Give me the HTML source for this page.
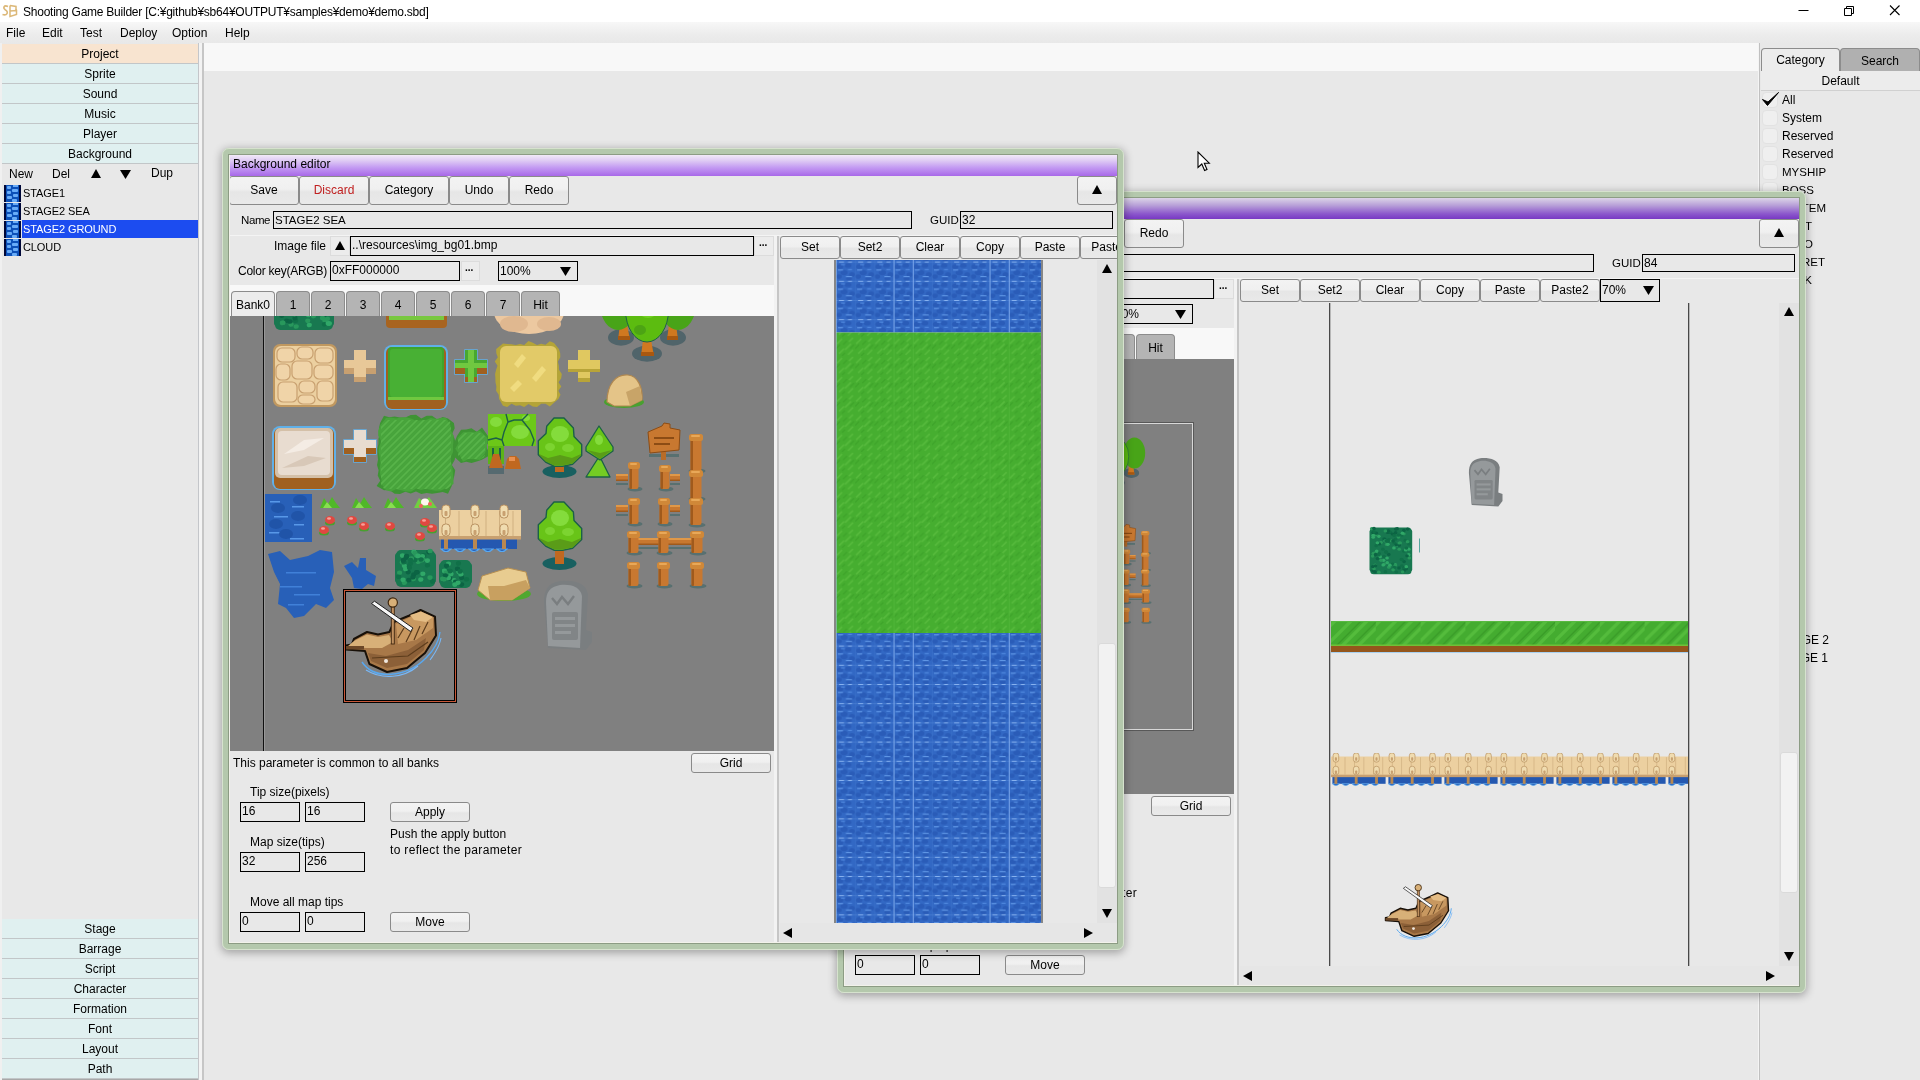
<!DOCTYPE html><html><head><meta charset="utf-8"><title>Shooting Game Builder</title><style>
*{box-sizing:border-box}
html,body{margin:0;padding:0}
body{width:1920px;height:1080px;position:relative;overflow:hidden;background:#e8e8e8;will-change:transform;
 font-family:"Liberation Sans","Noto Sans CJK JP",sans-serif;font-size:12px;color:#000;}
.a{position:absolute;white-space:nowrap}
.t{position:absolute;white-space:nowrap;line-height:16px;height:16px}
.btn{position:absolute;border:1px solid #8a8a8a;border-radius:3px;background:linear-gradient(#f3f3f3,#f0f0f0 45%,#e6e6e6 55%,#e9e9e9);text-align:center;white-space:nowrap;overflow:hidden}
.inp{position:absolute;border:1px solid #000;background:#e8e8e8;white-space:nowrap;overflow:hidden;padding-left:1px}
.sb{position:absolute;left:2px;width:196px;height:20px;line-height:20px;text-align:center;background:#e0f0f0;border-bottom:1px solid #c2c6c8}
.tab{position:absolute;border:1px solid #8c8c8c;border-bottom:none;border-radius:4px 4px 0 0;background:#b4b4b4;text-align:center;line-height:26px;height:25px}
.tab.on{background:#ececec}
.win{position:absolute;background:#e8e8e8;border-radius:7px;box-shadow:0 2px 8px 1px rgba(0,0,0,.3)}
.frame{position:absolute;left:0;top:0;right:0;bottom:0;border:7px solid #b4c8ac;border-radius:7px;pointer-events:none}
.frame:before{content:'';position:absolute;left:-7px;top:-7px;right:-7px;bottom:-7px;border:1px solid #d6e2ce;border-radius:7px}
.frame:after{content:'';position:absolute;left:-1px;top:-1px;right:-1px;bottom:-1px;border:1px solid #8c9c84;box-shadow:inset 1px -1px 0 0 #f2f2ea}
.ttl{position:absolute;left:7px;right:7px;top:8px;height:20px;line-height:19px;padding-left:4px}
.ck{position:absolute;left:1762px;width:16px;height:16px;border-radius:4px;background:#efefef;border:1px solid #e2e2e2}
</style></head><body>
<div class="a" style="left:0px;top:0px;width:1920px;height:22px;background:#fff;"></div>
<svg class="a" style="left:1px;top:3px" width="18" height="16" viewBox="0 0 18 16"><path d="M7 3.5 C3 1.5 1.5 5 4.5 7 C8 9 6 13 1.5 11.5" fill="none" stroke="#dcb878" stroke-width="1.6"/><path d="M9 2.5 L9 13.5 L15.5 11.5 L15.5 7.5 L9 8 M9 2.5 L15 3.5 L15 7.5" fill="none" stroke="#dcb878" stroke-width="1.5"/></svg>
<div class="t" style="left:23px;top:4px;font-size:12px;letter-spacing:-0.24px">Shooting Game Builder [C:¥github¥sb64¥OUTPUT¥samples¥demo¥demo.sbd]</div>
<svg class="a" style="left:1780px;top:0" width="140" height="22"><path d="M18.5 10.5h10" stroke="#000" stroke-width="1"/><path d="M64.5 8.5h7v7h-7z M66.5 8.5v-2h7v7h-2" fill="none" stroke="#000" stroke-width="1"/><path d="M110 5.5l9.5 9.5M119.5 5.5l-9.5 9.5" stroke="#000" stroke-width="1.1"/></svg>
<div class="a" style="left:0px;top:22px;width:1920px;height:21px;background:linear-gradient(#f7f7f7,#ececec 60%,#e8e8e8);"></div>
<div class="t" style="left:6px;top:25px;">File</div>
<div class="t" style="left:42px;top:25px;">Edit</div>
<div class="t" style="left:80px;top:25px;">Test</div>
<div class="t" style="left:120px;top:25px;">Deploy</div>
<div class="t" style="left:172px;top:25px;">Option</div>
<div class="t" style="left:225px;top:25px;">Help</div>
<div class="a" style="left:204px;top:43px;width:1554px;height:28px;background:#f8f8f8;"></div>
<div class="a" style="left:0px;top:43px;width:2px;height:1037px;background:#f0f0f0;"></div>
<div class="a" style="left:198px;top:43px;width:1px;height:1037px;background:#c4c6ca;"></div>
<div class="a" style="left:199px;top:43px;width:3px;height:1037px;background:#f3f3f3;"></div>
<div class="a" style="left:202px;top:43px;width:2px;height:1037px;background:#c6c6c6;"></div>
<div class="sb" style="top:44px;background:#f8e4d0">Project</div>
<div class="sb" style="top:64px;background:#e0f0f0">Sprite</div>
<div class="sb" style="top:84px;background:#e0f0f0">Sound</div>
<div class="sb" style="top:104px;background:#e0f0f0">Music</div>
<div class="sb" style="top:124px;background:#e0f0f0">Player</div>
<div class="sb" style="top:144px;background:#e0f0f0">Background</div>
<div class="sb" style="top:919px">Stage</div>
<div class="sb" style="top:939px">Barrage</div>
<div class="sb" style="top:959px">Script</div>
<div class="sb" style="top:979px">Character</div>
<div class="sb" style="top:999px">Formation</div>
<div class="sb" style="top:1019px">Font</div>
<div class="sb" style="top:1039px">Layout</div>
<div class="sb" style="top:1059px">Path</div>
<div class="a" style="left:2px;top:1079px;width:196px;height:1px;background:#a8a8a8;"></div>
<div class="t" style="left:9px;top:166px;">New</div>
<div class="t" style="left:52px;top:166px;">Del</div>
<div class="t" style="left:151px;top:165px;">Dup</div>
<svg class="a" style="left:91px;top:169px" width="10" height="9"><polygon points="0,9 5.0,0 10,9" fill="#000"/></svg>
<svg class="a" style="left:120px;top:170px" width="11" height="9"><polygon points="0,0 11,0 5.5,9" fill="#000"/></svg>
<svg class="a" style="left:4px;top:185px" width="17" height="17"><rect x="0" y="0" width="17" height="17" fill="#0c50b8"/><rect x="0" y="0" width="2" height="17" fill="#000838"/><rect x="15" y="0" width="2" height="17" fill="#000838"/><rect x="3" y="1" width="4" height="3" rx="1" fill="#68acf8"/><rect x="9" y="0" width="5" height="2" fill="#68acf8"/><rect x="8" y="4" width="6" height="3" rx="1" fill="#68acf8"/><rect x="3" y="6" width="4" height="3" rx="1" fill="#68acf8"/><rect x="9" y="9" width="5" height="3" rx="1" fill="#68acf8"/><rect x="3" y="11" width="5" height="3" rx="1" fill="#68acf8"/><rect x="8" y="14" width="5" height="3" rx="1" fill="#68acf8"/></svg>
<div class="t" style="left:23px;top:185px;font-size:11px;letter-spacing:-.1px;">STAGE1</div>
<svg class="a" style="left:4px;top:203px" width="17" height="17"><rect x="0" y="0" width="17" height="17" fill="#0c50b8"/><rect x="0" y="0" width="2" height="17" fill="#000838"/><rect x="15" y="0" width="2" height="17" fill="#000838"/><rect x="3" y="1" width="4" height="3" rx="1" fill="#68acf8"/><rect x="9" y="0" width="5" height="2" fill="#68acf8"/><rect x="8" y="4" width="6" height="3" rx="1" fill="#68acf8"/><rect x="3" y="6" width="4" height="3" rx="1" fill="#68acf8"/><rect x="9" y="9" width="5" height="3" rx="1" fill="#68acf8"/><rect x="3" y="11" width="5" height="3" rx="1" fill="#68acf8"/><rect x="8" y="14" width="5" height="3" rx="1" fill="#68acf8"/></svg>
<div class="t" style="left:23px;top:203px;font-size:11px;letter-spacing:-.1px;">STAGE2 SEA</div>
<div class="a" style="left:22px;top:220px;width:176px;height:18px;background:#1c4cf0;"></div>
<svg class="a" style="left:4px;top:221px" width="17" height="17"><rect x="0" y="0" width="17" height="17" fill="#0c50b8"/><rect x="0" y="0" width="2" height="17" fill="#000838"/><rect x="15" y="0" width="2" height="17" fill="#000838"/><rect x="3" y="1" width="4" height="3" rx="1" fill="#68acf8"/><rect x="9" y="0" width="5" height="2" fill="#68acf8"/><rect x="8" y="4" width="6" height="3" rx="1" fill="#68acf8"/><rect x="3" y="6" width="4" height="3" rx="1" fill="#68acf8"/><rect x="9" y="9" width="5" height="3" rx="1" fill="#68acf8"/><rect x="3" y="11" width="5" height="3" rx="1" fill="#68acf8"/><rect x="8" y="14" width="5" height="3" rx="1" fill="#68acf8"/></svg>
<div class="t" style="left:23px;top:221px;font-size:11px;letter-spacing:-.1px;color:#fff">STAGE2 GROUND</div>
<svg class="a" style="left:4px;top:239px" width="17" height="17"><rect x="0" y="0" width="17" height="17" fill="#0c50b8"/><rect x="0" y="0" width="2" height="17" fill="#000838"/><rect x="15" y="0" width="2" height="17" fill="#000838"/><rect x="3" y="1" width="4" height="3" rx="1" fill="#68acf8"/><rect x="9" y="0" width="5" height="2" fill="#68acf8"/><rect x="8" y="4" width="6" height="3" rx="1" fill="#68acf8"/><rect x="3" y="6" width="4" height="3" rx="1" fill="#68acf8"/><rect x="9" y="9" width="5" height="3" rx="1" fill="#68acf8"/><rect x="3" y="11" width="5" height="3" rx="1" fill="#68acf8"/><rect x="8" y="14" width="5" height="3" rx="1" fill="#68acf8"/></svg>
<div class="t" style="left:23px;top:239px;font-size:11px;letter-spacing:-.1px;">CLOUD</div>
<div class="a" style="left:1759px;top:43px;width:1px;height:1037px;background:#c0c0c0;"></div>
<div class="a" style="left:1760px;top:43px;width:160px;height:1037px;background:#e8e8e8;"></div>
<div class="a" style="left:1758px;top:43px;width:1px;height:1037px;background:#f4f4f4;"></div>
<div class="tab" style="left:1840px;top:48px;width:80px;height:23px;line-height:25px;background:#b0b0b0">Search</div>
<div class="tab on" style="left:1761px;top:48px;width:79px;height:23px;line-height:23px">Category</div>
<div class="a" style="left:1761px;top:71px;width:159px;height:20px;line-height:21px;text-align:center;background:#ececec;border-bottom:1px solid #d0d0d0">Default</div>
<div class="ck" style="top:92px"></div>
<div class="t" style="left:1782px;top:92px;">All</div>
<div class="ck" style="top:110px"></div>
<div class="t" style="left:1782px;top:110px;">System</div>
<div class="ck" style="top:128px"></div>
<div class="t" style="left:1782px;top:128px;">Reserved</div>
<div class="ck" style="top:146px"></div>
<div class="t" style="left:1782px;top:146px;">Reserved</div>
<div class="ck" style="top:164px"></div>
<div class="t" style="left:1782px;top:164px;font-size:11.5px">MYSHIP</div>
<div class="ck" style="top:182px"></div>
<div class="t" style="left:1782px;top:182px;font-size:11.5px">BOSS</div>
<div class="t" style="right:94px;top:200px;font-size:11.5px">ITEM</div>
<div class="t" style="right:108px;top:218px;font-size:11.5px">SHOT</div>
<div class="t" style="right:107px;top:236px;font-size:11.5px">ZAKO</div>
<div class="t" style="right:95px;top:254px;font-size:11.5px">TURRET</div>
<div class="t" style="right:108px;top:272px;font-size:11.5px">ROCK</div>
<svg class="a" style="left:1760px;top:90px" width="20" height="20"><path d="M2.5 9.5 L7.5 15.5 L18.5 2.5 L8 12 Z" fill="#000" stroke="#000" stroke-width="1" stroke-linejoin="miter"/></svg>
<div class="t" style="right:91px;top:632px">STAGE 2</div>
<div class="t" style="right:92px;top:650px">STAGE 1</div>
<div class="win" style="left:837px;top:191px;width:969px;height:802px">
<div class="a" style="left:7px;top:7px;width:955px;height:788px;overflow:hidden;background:#e8e8e8">
<div class="a" style="left:0;top:0;width:955px;height:21px;background:linear-gradient(#dcd4e8 0%,#b8a0d8 35%,#8c58cc 75%,#7838c4 100%);line-height:19px;padding-left:4px"></div>
<div class="btn" style="left:0px;top:21px;width:70px;height:29px;line-height:27px;">Save</div>
<div class="btn" style="left:70px;top:21px;width:70px;height:29px;line-height:27px;color:#c02020">Discard</div>
<div class="btn" style="left:140px;top:21px;width:80px;height:29px;line-height:27px;">Category</div>
<div class="btn" style="left:220px;top:21px;width:60px;height:29px;line-height:27px;">Undo</div>
<div class="btn" style="left:280px;top:21px;width:60px;height:29px;line-height:27px;">Redo</div>
<div class="btn" style="left:915px;top:21px;width:40px;height:29px;line-height:27px;"></div>
<svg class="a" style="left:930px;top:30px" width="10" height="9"><polygon points="0,9 5.0,0 10,9" fill="#000"/></svg>
<div class="t" style="left:12px;top:57px;letter-spacing:-.4px;font-size:11.5px">Name</div>
<div class="inp" style="left:44px;top:56px;width:706px;height:18px;line-height:15px;line-height:17px;font-size:11.5px">STAGE2 GROUND</div>
<div class="t" style="left:768px;top:57px;font-size:11.5px">GUID</div>
<div class="inp" style="left:798px;top:56px;width:153px;height:18px;line-height:15px;line-height:17px">84</div>
<div class="a" style="left:0px;top:80px;width:955px;height:1px;background:#f4f4f4;"></div>
<div class="a" style="left:0;top:81px;width:390px;height:707px;overflow:hidden">
<div class="t" style="left:45px;top:2px;">Image file</div>
<div class="a" style="left:101px;top:0px;width:20px;height:20px;background:#ececec;border:1px solid #dcdcdc"></div>
<svg class="a" style="left:106px;top:5px" width="10" height="9"><polygon points="0,9 5.0,0 10,9" fill="#000"/></svg>
<div class="inp" style="left:121px;top:0px;width:249px;height:20px;line-height:17px;line-height:16px">..\resources\img_bg01.bmp</div>
<div class="a" style="left:370px;top:0px;width:20px;height:20px;background:#ececec;border:1px solid #dcdcdc"></div>
<div class="t" style="left:375px;top:-1px;font-size:10px;font-weight:bold">...</div>
<div class="t" style="left:9px;top:27px;letter-spacing:-.25px">Color key(ARGB)</div>
<div class="inp" style="left:101px;top:25px;width:130px;height:20px;line-height:17px;">0xFF000000</div>
<div class="a" style="left:232px;top:25px;width:19px;height:20px;background:#ececec;border:1px solid #dcdcdc"></div>
<div class="t" style="left:236px;top:24px;font-size:10px;font-weight:bold">...</div>
<div class="inp" style="left:269px;top:25px;width:80px;height:20px;line-height:17px;line-height:18px">70%</div>
<svg class="a" style="left:331px;top:31px" width="11" height="9"><polygon points="0,0 11,0 5.5,9" fill="#000"/></svg>
<div class="a" style="left:0px;top:49px;width:390px;height:31px;background:#f8f8f8;"></div>
<div class="tab on" style="left:2px;top:55px;width:44px">Bank0</div>
<div class="tab" style="left:47px;top:55px;width:34px">1</div>
<div class="tab" style="left:82px;top:55px;width:34px">2</div>
<div class="tab" style="left:117px;top:55px;width:34px">3</div>
<div class="tab" style="left:152px;top:55px;width:34px">4</div>
<div class="tab" style="left:187px;top:55px;width:34px">5</div>
<div class="tab" style="left:222px;top:55px;width:34px">6</div>
<div class="tab" style="left:257px;top:55px;width:34px">7</div>
<div class="tab" style="left:292px;top:55px;width:39px">Hit</div>
<div class="a" style="left:0px;top:80px;width:390px;height:435px;background:#808080;"></div>
<div class="a" style="left:34px;top:80px;width:1px;height:435px;background:#101010;"></div>
<div class="a" style="left:35px;top:80px;width:1px;height:435px;background:#989898;"></div>
<div class="a" style="left:0;top:80px;width:390px;height:435px;overflow:hidden">
<div class="a" style="left:41px;top:63px;width:309px;height:309px;border:1px solid #585858;box-shadow:inset -1px -1px 0 0 #d8d8d8, inset 1px 1px 0 0 #d8d8d8"></div>
<div class="a" style="left:42px;top:64px;width:512px;height:512px;transform:scale(.6);transform-origin:0 0"><svg width="512" height="512" viewBox="0 0 512 512" style="display:block"><rect x="11" y="46" width="58" height="30" fill="#187850" rx="5"/><rect x="10" y="49" width="60" height="23" fill="#187850" rx="3"/><ellipse cx="26.0" cy="49.5" rx="2.6" ry="2.3" fill="#107048" /><ellipse cx="46.8" cy="48.2" rx="2.6" ry="2.3" fill="#30a868" /><ellipse cx="44.4" cy="61.0" rx="2.6" ry="2.3" fill="#30a868" /><ellipse cx="31.2" cy="49.8" rx="2.6" ry="2.3" fill="#28985c" /><ellipse cx="61.3" cy="59.0" rx="2.6" ry="2.3" fill="#28985c" /><ellipse cx="45.3" cy="71.0" rx="2.6" ry="2.3" fill="#30a868" /><ellipse cx="60.8" cy="60.7" rx="2.6" ry="2.3" fill="#0c6444" /><ellipse cx="46.6" cy="53.0" rx="2.6" ry="2.3" fill="#107048" /><ellipse cx="59.7" cy="55.7" rx="2.6" ry="2.3" fill="#30a868" /><ellipse cx="63.5" cy="64.8" rx="2.6" ry="2.3" fill="#28985c" /><ellipse cx="65.4" cy="69.6" rx="2.6" ry="2.3" fill="#30a868" /><ellipse cx="31.6" cy="66.7" rx="2.6" ry="2.3" fill="#107048" /><ellipse cx="38.9" cy="49.1" rx="2.6" ry="2.3" fill="#107048" /><ellipse cx="18.4" cy="68.9" rx="2.6" ry="2.3" fill="#28985c" /><ellipse cx="24.3" cy="49.1" rx="2.6" ry="2.3" fill="#30a868" /><ellipse cx="17.7" cy="53.1" rx="2.6" ry="2.3" fill="#0c6444" /><ellipse cx="17.6" cy="61.7" rx="2.6" ry="2.3" fill="#0c6444" /><ellipse cx="32.0" cy="49.8" rx="2.6" ry="2.3" fill="#0c6444" /><ellipse cx="43.8" cy="66.8" rx="2.6" ry="2.3" fill="#28985c" /><ellipse cx="27.1" cy="70.5" rx="2.6" ry="2.3" fill="#28985c" /><ellipse cx="46.6" cy="48.0" rx="2.6" ry="2.3" fill="#30a868" /><ellipse cx="32.2" cy="72.5" rx="2.6" ry="2.3" fill="#28985c" /><ellipse cx="38.4" cy="53.9" rx="2.6" ry="2.3" fill="#30a868" /><ellipse cx="40.5" cy="58.6" rx="2.6" ry="2.3" fill="#30a868" /><ellipse cx="31.3" cy="50.0" rx="2.6" ry="2.3" fill="#107048" /><ellipse cx="40.4" cy="57.4" rx="2.6" ry="2.3" fill="#28985c" /><ellipse cx="58.5" cy="63.9" rx="2.6" ry="2.3" fill="#28985c" /><ellipse cx="66.9" cy="58.7" rx="2.6" ry="2.3" fill="#0c6444" /><ellipse cx="42.0" cy="52.6" rx="2.6" ry="2.3" fill="#107048" /><ellipse cx="22.7" cy="66.8" rx="2.6" ry="2.3" fill="#0c6444" /><ellipse cx="19.0" cy="68.8" rx="2.6" ry="2.3" fill="#28985c" /><ellipse cx="57.3" cy="58.4" rx="2.6" ry="2.3" fill="#0c6444" /><ellipse cx="51.7" cy="57.8" rx="2.6" ry="2.3" fill="#28985c" /><ellipse cx="30.6" cy="56.1" rx="2.6" ry="2.3" fill="#28985c" /><ellipse cx="15.3" cy="51.6" rx="2.6" ry="2.3" fill="#0c6444" /><ellipse cx="40.9" cy="51.9" rx="2.6" ry="2.3" fill="#107048" /><ellipse cx="15.6" cy="47.0" rx="2.6" ry="2.3" fill="#0c6444" /><ellipse cx="47.6" cy="58.7" rx="2.6" ry="2.3" fill="#30a868" /><ellipse cx="16.5" cy="50.6" rx="2.6" ry="2.3" fill="#107048" /><ellipse cx="46.9" cy="60.0" rx="2.6" ry="2.3" fill="#0c6444" /><ellipse cx="20.1" cy="58.8" rx="2.6" ry="2.3" fill="#28985c" /><ellipse cx="29.0" cy="54.7" rx="2.6" ry="2.3" fill="#0c6444" /><ellipse cx="60.9" cy="66.6" rx="2.6" ry="2.3" fill="#28985c" /><ellipse cx="31.0" cy="64.1" rx="2.6" ry="2.3" fill="#0c6444" /><ellipse cx="48.0" cy="52.2" rx="2.6" ry="2.3" fill="#28985c" /><ellipse cx="60.5" cy="70.3" rx="2.6" ry="2.3" fill="#107048" /><ellipse cx="30.4" cy="60.1" rx="2.6" ry="2.3" fill="#30a868" /><ellipse cx="49.5" cy="62.1" rx="2.6" ry="2.3" fill="#28985c" /><ellipse cx="26.0" cy="67.5" rx="2.6" ry="2.3" fill="#0c6444" /><ellipse cx="48.0" cy="56.8" rx="2.6" ry="2.3" fill="#107048" /><ellipse cx="37.4" cy="56.7" rx="2.6" ry="2.3" fill="#28985c" /><ellipse cx="64.3" cy="69.4" rx="2.6" ry="2.3" fill="#30a868" /><rect x="122" y="30" width="61" height="44" fill="#a86420" rx="4"/><rect x="125" y="30" width="55" height="36" fill="#44a830" rx="3"/><rect x="125" y="62" width="55" height="4" fill="#78c840" /><ellipse cx="265" cy="58" rx="35" ry="22" fill="#ecc8a0" /><ellipse cx="250" cy="70" rx="14" ry="8" fill="#e0b890" /><ellipse cx="285" cy="70" rx="12" ry="7" fill="#e0b890" /><g><g transform="translate(0,0)"><ellipse cx="357" cy="83.5" rx="13" ry="8.2" fill="#50646a" /><ellipse cx="409" cy="83.5" rx="13" ry="8.2" fill="#50646a" /><ellipse cx="383" cy="99.7" rx="15" ry="8" fill="#50646a" /><polygon points="354,86 356,70 363,70 366,86" fill="#d07820" /><polygon points="403,86 405,70 412,70 414,86" fill="#d07820" /><polygon points="377,102 379,86 387,86 390,102" fill="#d07820" /><rect x="354" y="82" width="12" height="4" fill="#a85810" /><rect x="403" y="82" width="11" height="4" fill="#a85810" /><rect x="377" y="98" width="13" height="4" fill="#a85810" /><ellipse cx="354" cy="50" rx="18" ry="26" fill="#48a418" /><ellipse cx="414" cy="50" rx="18" ry="26" fill="#48a418" /><ellipse cx="383" cy="56" rx="21.5" ry="32" fill="#5cbc10" stroke="#1c6048" stroke-width="1"/><ellipse cx="384" cy="50" rx="12" ry="14" fill="#70d020" /><ellipse cx="376" cy="76" rx="6" ry="5" fill="#4ca414" /></g></g><rect x="9" y="90" width="64" height="63" fill="#c09860" rx="7"/><rect x="11" y="92" width="60" height="59" fill="#ecd0a0" rx="6"/><rect x="13" y="94" width="18" height="14" fill="#f0d4a8" rx="5" stroke="#c8a070" stroke-width="1.2"/><rect x="33" y="93" width="16" height="12" fill="#f0d4a8" rx="5" stroke="#c8a070" stroke-width="1.2"/><rect x="51" y="94" width="18" height="15" fill="#f0d4a8" rx="5" stroke="#c8a070" stroke-width="1.2"/><rect x="12" y="110" width="14" height="16" fill="#f0d4a8" rx="5" stroke="#c8a070" stroke-width="1.2"/><rect x="28" y="107" width="20" height="18" fill="#f0d4a8" rx="5" stroke="#c8a070" stroke-width="1.2"/><rect x="50" y="111" width="19" height="14" fill="#f0d4a8" rx="5" stroke="#c8a070" stroke-width="1.2"/><rect x="14" y="128" width="19" height="20" fill="#f0d4a8" rx="5" stroke="#c8a070" stroke-width="1.2"/><rect x="35" y="127" width="16" height="12" fill="#f0d4a8" rx="5" stroke="#c8a070" stroke-width="1.2"/><rect x="53" y="127" width="16" height="20" fill="#f0d4a8" rx="5" stroke="#c8a070" stroke-width="1.2"/><rect x="34" y="141" width="17" height="9" fill="#f0d4a8" rx="5" stroke="#c8a070" stroke-width="1.2"/><rect x="80" y="106" width="32" height="14" fill="#e8c898" /><rect x="90" y="96" width="12" height="32" fill="#e8c898" /><rect x="80" y="114" width="10" height="6" fill="#c8a070" /><rect x="102" y="114" width="10" height="6" fill="#c8a070" /><rect x="90" y="123" width="12" height="5" fill="#c8a070" /><rect x="120" y="91" width="64" height="65" fill="#60b0e8" rx="8"/><rect x="122" y="93" width="60" height="62" fill="#a06020" rx="6"/><rect x="124" y="93" width="56" height="52" fill="#3ea42c" rx="4"/><rect x="126" y="95" width="52" height="48" fill="#48b034" rx="3"/><rect x="124" y="143" width="56" height="3" fill="#70c840" /><polygon points="201,96 213,96 213,106 223,106 223,120 213,120 213,128 201,128 201,120 191,120 191,106 201,106" fill="none" stroke="#60b0e8" stroke-width="1.5"/><rect x="191" y="106" width="32" height="14" fill="#48a830" /><rect x="201" y="96" width="12" height="32" fill="#48a830" /><rect x="191" y="114" width="10" height="6" fill="#a06020" /><rect x="213" y="114" width="10" height="6" fill="#a06020" /><rect x="201" y="123" width="12" height="5" fill="#a06020" /><rect x="204" y="96" width="6" height="32" fill="#70c840" /><rect x="191" y="109" width="32" height="5" fill="#70c840" /><polygon points="239.0,89.5 243.2,90.1 247.5,90.3 251.8,90.9 256.0,90.1 260.2,90.9 264.5,86.9 268.8,88.8 273.0,91.0 277.2,89.7 281.5,90.8 285.8,87.3 290.0,88.9 294.9,95.0 296.2,99.2 296.3,103.3 293.9,107.5 294.8,111.7 295.0,115.8 297.8,120.0 297.2,124.2 294.5,128.3 297.3,132.5 294.4,136.7 296.5,140.8 294.4,145.0 290.0,148.8 285.8,152.6 281.5,149.7 277.2,149.7 273.0,153.1 268.8,152.6 264.5,150.1 260.2,153.0 256.0,151.2 251.8,151.8 247.5,149.7 243.2,152.9 239.0,151.8 235.1,145.0 234.7,140.8 232.1,136.7 232.4,132.5 231.5,128.3 231.4,124.2 231.1,120.0 232.1,115.8 233.5,111.7 230.8,107.5 233.8,103.3 232.3,99.2 232.2,95.0" fill="#b4a438" /><rect x="236" y="92" width="57" height="56" fill="#e2ca68" rx="6"/><polygon points="250,110 258,100 262,104 254,114" fill="#f0dc80" /><polygon points="268,124 278,112 282,116 272,128" fill="#f0dc80" /><polygon points="246,134 254,126 258,130 250,138" fill="#f0dc80" /><rect x="304" y="106" width="32" height="12" fill="#e0c860" /><rect x="314" y="96" width="12" height="32" fill="#e0c860" /><rect x="304" y="115" width="32" height="3" fill="#b8a438" /><rect x="314" y="124" width="12" height="4" fill="#b8a438" /><ellipse cx="360" cy="148" rx="20" ry="6" fill="#48a030" /><path d="M343 148 C343 130 352 120 364 121 C374 122 379 134 378 146 L366 152 L350 152 Z" fill="#e4c488" stroke="#b08850" stroke-width="1.2"/><polygon points="366,152 378,146 376,132 362,138" fill="#c8a468" /><rect x="8" y="172" width="64" height="64" fill="#60b0e8" rx="8"/><rect x="10" y="174" width="60" height="61" fill="#a06020" rx="6"/><rect x="11" y="174" width="58" height="50" fill="#d4c0a8" rx="5"/><rect x="14" y="177" width="52" height="44" fill="#e8dcd0" rx="4"/><polygon points="20,200 40,186 60,184 40,196" fill="#f4ece4" /><polygon points="18,214 44,202 62,204 40,212" fill="#d8c8b8" /><polygon points="90,176 102,176 102,186 112,186 112,200 102,200 102,208 90,208 90,200 80,200 80,186 90,186" fill="none" stroke="#60b0e8" stroke-width="1.5"/><rect x="80" y="186" width="32" height="14" fill="#e8dcd0" /><rect x="90" y="176" width="12" height="32" fill="#e8dcd0" /><rect x="80" y="194" width="10" height="6" fill="#a06020" /><rect x="102" y="194" width="10" height="6" fill="#a06020" /><rect x="90" y="203" width="12" height="5" fill="#a06020" /><polygon points="120.0,161.7 125.3,163.2 130.7,162.4 136.0,163.5 141.3,163.6 146.7,160.9 152.0,160.7 157.3,164.6 162.7,161.8 168.0,161.7 173.3,165.4 178.7,162.9 184.0,164.6 189.9,169.0 190.7,174.2 188.3,179.5 190.6,184.8 191.8,190.0 190.1,195.2 191.2,200.5 190.8,205.8 187.9,211.0 191.2,216.2 190.4,221.5 189.0,226.8 187.7,232.0 184.0,239.8 178.7,237.9 173.3,239.1 168.0,239.8 162.7,239.0 157.3,240.0 152.0,237.5 146.7,239.4 141.3,237.7 136.0,240.1 130.7,239.8 125.3,236.1 120.0,236.3 112.6,232.0 116.2,226.8 113.7,221.5 114.6,216.2 113.0,211.0 114.0,205.8 113.5,200.5 113.3,195.2 114.4,190.0 114.4,184.8 115.9,179.5 114.9,174.2 116.1,169.0" fill="#3e9434" /><polygon points="122.0,163.9 127.0,163.4 132.0,164.6 137.0,163.6 142.0,163.3 147.0,164.6 152.0,166.7 157.0,166.2 162.0,166.1 167.0,163.9 172.0,165.1 177.0,164.1 182.0,163.7 186.4,171.0 186.9,176.4 189.7,181.7 189.3,187.1 189.2,192.5 189.2,197.8 186.8,203.2 187.2,208.5 188.5,213.9 188.9,219.3 189.4,224.6 189.5,230.0 182.0,234.3 177.0,236.4 172.0,236.7 167.0,236.0 162.0,234.7 157.0,235.9 152.0,234.4 147.0,237.7 142.0,237.5 137.0,236.2 132.0,235.2 127.0,237.6 122.0,236.3 117.5,230.0 117.4,224.6 116.0,219.3 115.7,213.9 116.4,208.5 115.7,203.2 114.6,197.8 115.2,192.5 117.3,187.1 114.2,181.7 114.2,176.4 116.5,171.0" fill="#48a43c" /><clipPath id="d114_163"><rect x="117" y="166" width="70" height="69" rx="5"/></clipPath><g clip-path="url(#d114_163)" stroke="#58b44a" stroke-width="1.6"><path d="M39 238 L114 163"/><path d="M46 238 L121 163"/><path d="M53 238 L128 163"/><path d="M60 238 L135 163"/><path d="M67 238 L142 163"/><path d="M74 238 L149 163"/><path d="M81 238 L156 163"/><path d="M88 238 L163 163"/><path d="M95 238 L170 163"/><path d="M102 238 L177 163"/><path d="M109 238 L184 163"/><path d="M116 238 L191 163"/><path d="M123 238 L198 163"/><path d="M130 238 L205 163"/><path d="M137 238 L212 163"/><path d="M144 238 L219 163"/><path d="M151 238 L226 163"/><path d="M158 238 L233 163"/><path d="M165 238 L240 163"/><path d="M172 238 L247 163"/><path d="M179 238 L254 163"/><path d="M186 238 L261 163"/></g><polygon points="197.0,175.8 202.2,175.4 207.5,174.3 212.8,177.8 218.0,173.6 224.0,182.0 225.9,187.0 222.0,192.0 224.3,197.0 224.6,202.0 218.0,205.8 212.8,207.4 207.5,209.0 202.2,207.8 197.0,209.1 189.4,202.0 189.7,197.0 189.1,192.0 191.0,187.0 193.0,182.0" fill="#3e9434" /><polygon points="199.0,178.3 204.7,177.7 210.3,178.3 216.0,176.8 223.3,184.0 223.3,189.3 222.6,194.7 220.6,200.0 216.0,206.1 210.3,205.3 204.7,205.0 199.0,207.8 195.0,200.0 191.2,194.7 194.4,189.3 193.4,184.0" fill="#48a43c" /><clipPath id="d191_176"><rect x="194" y="179" width="27" height="26" rx="5"/></clipPath><g clip-path="url(#d191_176)" stroke="#58b44a" stroke-width="1.6"><path d="M159 208 L191 176"/><path d="M166 208 L198 176"/><path d="M173 208 L205 176"/><path d="M180 208 L212 176"/><path d="M187 208 L219 176"/><path d="M194 208 L226 176"/><path d="M201 208 L233 176"/><path d="M208 208 L240 176"/><path d="M215 208 L247 176"/><path d="M222 208 L254 176"/></g><rect x="224" y="160" width="48" height="32" fill="#6cc818" /><ellipse cx="232" cy="168" rx="6" ry="5" fill="#84dc3c" /><ellipse cx="256" cy="178" rx="9" ry="7" fill="#84dc3c" /><ellipse cx="262" cy="164" rx="4" ry="3" fill="#84dc3c" /><path d="M242 160 L244 168 L240 178 L238 186 L232 184 L224 186 M244 168 L250 166 L258 166 L264 160 M258 166 L266 176 L270 186 L268 192 M238 186 L240 192" fill="none" stroke="#1c6048" stroke-width="1.4"/><rect x="224" y="192" width="16" height="18" fill="#5cb418" /><rect x="228" y="194" width="2" height="12" fill="#1c6048" /><rect x="235" y="194" width="2" height="12" fill="#1c6048" /><rect x="224" y="212" width="16" height="8" fill="#566a70" /><polygon points="225,214 229,200 235,200 239,214" fill="#c06820" /><polygon points="241,215 243,205 246,202 252,202 255,205 257,215" fill="#c06820" /><rect x="245" y="203" width="6" height="4" fill="#e89050" /><ellipse cx="295.5" cy="217.5" rx="17" ry="6.5" fill="#186060" /><rect x="291" y="210" width="9" height="8" fill="#c06820" /><polygon points="290,164 300,164 309.4,174 310,182.4 317.7,190.5 317.7,201.4 308.6,210.2 298.4,212.4 290.4,212.4 281.6,208 274.3,200.7 274.3,186.8 282,179.5 282.7,172.2" fill="#68c418" stroke="#1c6048" stroke-width="1.4" stroke-linejoin="round"/><polygon points="275,200 284,204 296,201 308,204 317,200 317,201.4 308.6,209.6 298.4,211.6 290.4,211.6 281.6,207.4 275,200.7" fill="#5a9c18" /><ellipse cx="296" cy="180" rx="9" ry="8" fill="#84dc3c" /><ellipse cx="286" cy="193" rx="5" ry="4" fill="#7cd430" /><ellipse cx="304" cy="194" rx="6" ry="4" fill="#7cd430" /><polygon points="335.5,202 346,223 322,223" fill="#74cc24" stroke="#1c6048" stroke-width="1.3" stroke-linejoin="round"/><polygon points="335,172 349,193 349,197 336,206 322,197 322,193" fill="#68c418" stroke="#1c6048" stroke-width="1.3" stroke-linejoin="round"/><polygon points="323,196 336,199 348,196 336,205" fill="#5a9c18" /><ellipse cx="335" cy="186" rx="4" ry="5" fill="#84dc3c" /><g ><ellipse cx="433.0" cy="217" rx="8.5" ry="2.5" fill="#587070" /><rect x="426.5" y="183" width="11" height="34" fill="#c87830" rx="2"/><rect x="426.5" y="183" width="2.5" height="34" fill="#a05a1c" rx="1"/><rect x="425" y="180" width="14" height="7" fill="#d08838" rx="2.5"/><rect x="427" y="181" width="9" height="2" fill="#e8a858" rx="1"/><ellipse cx="433.0" cy="245" rx="8.5" ry="2.5" fill="#587070" /><rect x="426.5" y="219" width="11" height="26" fill="#c87830" rx="2"/><rect x="426.5" y="219" width="2.5" height="26" fill="#a05a1c" rx="1"/><rect x="425" y="216" width="14" height="7" fill="#d08838" rx="2.5"/><rect x="427" y="217" width="9" height="2" fill="#e8a858" rx="1"/><ellipse cx="433.0" cy="271" rx="8.5" ry="2.5" fill="#587070" /><rect x="426.5" y="247" width="11" height="24" fill="#c87830" rx="2"/><rect x="426.5" y="247" width="2.5" height="24" fill="#a05a1c" rx="1"/><rect x="425" y="244" width="14" height="7" fill="#d08838" rx="2.5"/><rect x="427" y="245" width="9" height="2" fill="#e8a858" rx="1"/><rect x="352" y="229" width="12" height="2" fill="#587070" /><rect x="352" y="220" width="12" height="7" fill="#c87830" /><rect x="352" y="220" width="12" height="2" fill="#e09848" /><rect x="352" y="225.5" width="12" height="1.5" fill="#a05a1c" /><ellipse cx="371.0" cy="235" rx="7.5" ry="2.5" fill="#587070" /><rect x="365.5" y="211" width="9" height="24" fill="#c87830" rx="2"/><rect x="365.5" y="211" width="2.5" height="24" fill="#a05a1c" rx="1"/><rect x="364" y="208" width="12" height="7" fill="#d08838" rx="2.5"/><rect x="366" y="209" width="7" height="2" fill="#e8a858" rx="1"/><rect x="406" y="229" width="10" height="2" fill="#587070" /><rect x="406" y="220" width="10" height="7" fill="#c87830" /><rect x="406" y="220" width="10" height="2" fill="#e09848" /><rect x="406" y="225.5" width="10" height="1.5" fill="#a05a1c" /><ellipse cx="402.0" cy="235" rx="7.5" ry="2.5" fill="#587070" /><rect x="396.5" y="214" width="9" height="21" fill="#c87830" rx="2"/><rect x="396.5" y="214" width="2.5" height="21" fill="#a05a1c" rx="1"/><rect x="395" y="211" width="12" height="7" fill="#d08838" rx="2.5"/><rect x="397" y="212" width="7" height="2" fill="#e8a858" rx="1"/><rect x="352" y="260" width="12" height="2" fill="#587070" /><rect x="352" y="251" width="12" height="7" fill="#c87830" /><rect x="352" y="251" width="12" height="2" fill="#e09848" /><rect x="352" y="256.5" width="12" height="1.5" fill="#a05a1c" /><ellipse cx="371.0" cy="270" rx="7.5" ry="2.5" fill="#587070" /><rect x="365.5" y="247" width="9" height="23" fill="#c87830" rx="2"/><rect x="365.5" y="247" width="2.5" height="23" fill="#a05a1c" rx="1"/><rect x="364" y="244" width="12" height="7" fill="#d08838" rx="2.5"/><rect x="366" y="245" width="7" height="2" fill="#e8a858" rx="1"/><rect x="406" y="260" width="10" height="2" fill="#587070" /><rect x="406" y="251" width="10" height="7" fill="#c87830" /><rect x="406" y="251" width="10" height="2" fill="#e09848" /><rect x="406" y="256.5" width="10" height="1.5" fill="#a05a1c" /><ellipse cx="401.0" cy="270" rx="7.5" ry="2.5" fill="#587070" /><rect x="395.5" y="247" width="9" height="23" fill="#c87830" rx="2"/><rect x="395.5" y="247" width="2.5" height="23" fill="#a05a1c" rx="1"/><rect x="394" y="244" width="12" height="7" fill="#d08838" rx="2.5"/><rect x="396" y="245" width="7" height="2" fill="#e8a858" rx="1"/><rect x="374" y="293" width="54" height="2" fill="#587070" /><rect x="374" y="284" width="54" height="7" fill="#c87830" /><rect x="374" y="284" width="54" height="2" fill="#e09848" /><rect x="374" y="289.5" width="54" height="1.5" fill="#a05a1c" /><ellipse cx="370.5" cy="299" rx="8.0" ry="2.5" fill="#587070" /><rect x="364.5" y="280" width="10" height="19" fill="#c87830" rx="2"/><rect x="364.5" y="280" width="2.5" height="19" fill="#a05a1c" rx="1"/><rect x="363" y="277" width="13" height="7" fill="#d08838" rx="2.5"/><rect x="365" y="278" width="8" height="2" fill="#e8a858" rx="1"/><ellipse cx="400.5" cy="299" rx="8.0" ry="2.5" fill="#587070" /><rect x="394.5" y="280" width="10" height="19" fill="#c87830" rx="2"/><rect x="394.5" y="280" width="2.5" height="19" fill="#a05a1c" rx="1"/><rect x="393" y="277" width="13" height="7" fill="#d08838" rx="2.5"/><rect x="395" y="278" width="8" height="2" fill="#e8a858" rx="1"/><ellipse cx="434.0" cy="299" rx="8.5" ry="2.5" fill="#587070" /><rect x="427.5" y="280" width="11" height="19" fill="#c87830" rx="2"/><rect x="427.5" y="280" width="2.5" height="19" fill="#a05a1c" rx="1"/><rect x="426" y="277" width="14" height="7" fill="#d08838" rx="2.5"/><rect x="428" y="278" width="9" height="2" fill="#e8a858" rx="1"/><ellipse cx="370.5" cy="332" rx="8.0" ry="2.5" fill="#587070" /><rect x="364.5" y="311" width="10" height="21" fill="#c87830" rx="2"/><rect x="364.5" y="311" width="2.5" height="21" fill="#a05a1c" rx="1"/><rect x="363" y="308" width="13" height="7" fill="#d08838" rx="2.5"/><rect x="365" y="309" width="8" height="2" fill="#e8a858" rx="1"/><ellipse cx="400.5" cy="332" rx="8.0" ry="2.5" fill="#587070" /><rect x="394.5" y="311" width="10" height="21" fill="#c87830" rx="2"/><rect x="394.5" y="311" width="2.5" height="21" fill="#a05a1c" rx="1"/><rect x="393" y="308" width="13" height="7" fill="#d08838" rx="2.5"/><rect x="395" y="309" width="8" height="2" fill="#e8a858" rx="1"/><ellipse cx="434.0" cy="332" rx="8.5" ry="2.5" fill="#587070" /><rect x="427.5" y="311" width="11" height="21" fill="#c87830" rx="2"/><rect x="427.5" y="311" width="2.5" height="21" fill="#a05a1c" rx="1"/><rect x="426" y="308" width="14" height="7" fill="#d08838" rx="2.5"/><rect x="428" y="309" width="9" height="2" fill="#e8a858" rx="1"/><rect x="385" y="200" width="30" height="3" fill="#587070" /><rect x="397" y="176" width="5" height="30" fill="#b86c28" /><polygon points="384,178 398,172 400,169 406,170 406,174 416,176 415,196 386,199" fill="#c87830" stroke="#8c4c14" stroke-width="1"/><rect x="390" y="183" width="20" height="2" fill="#8c4c14" /><rect x="390" y="189" width="16" height="2" fill="#8c4c14" /></g><rect x="1" y="240" width="47" height="48" fill="#2860b8" /><rect x="6" y="247" width="10" height="1.5" fill="#5898e8" /><rect x="28" y="252" width="12" height="1.5" fill="#5898e8" /><rect x="10" y="262" width="14" height="1.5" fill="#5898e8" /><rect x="30" y="270" width="10" height="1.5" fill="#5898e8" /><rect x="5" y="278" width="12" height="1.5" fill="#5898e8" /><rect x="26" y="284" width="14" height="1.5" fill="#5898e8" /><ellipse cx="14" cy="254" rx="7" ry="5" fill="#2054a8" /><ellipse cx="34" cy="262" rx="7" ry="5" fill="#2054a8" /><ellipse cx="12" cy="270" rx="7" ry="5" fill="#2054a8" /><ellipse cx="36" cy="246" rx="7" ry="5" fill="#2054a8" /><ellipse cx="22" cy="280" rx="7" ry="5" fill="#2054a8" /><polygon points="56,254 60,244 64,250 68,243 72,249 76,254" fill="#50b828" /><polygon points="59,254 63,248 68,254" fill="#88e050" /><polygon points="88,254 92,244 96,250 100,243 104,249 108,254" fill="#50b828" /><polygon points="91,254 95,248 100,254" fill="#88e050" /><polygon points="120,254 124,244 128,250 132,243 136,249 140,254" fill="#50b828" /><polygon points="123,254 127,248 132,254" fill="#88e050" /><polygon points="150,254 155,244 160,248 165,243 170,250 173,254" fill="#70d040" /><ellipse cx="161" cy="248" rx="4" ry="3.5" fill="#fff8f0" /><ellipse cx="157" cy="252" rx="2" ry="2" fill="#f06060" /><ellipse cx="166" cy="250" rx="2" ry="2" fill="#f06060" /><ellipse cx="66" cy="269" rx="5" ry="2.5" fill="#48a030" /><ellipse cx="66" cy="266" rx="5" ry="4" fill="#e04840" /><ellipse cx="65" cy="264.5" rx="2" ry="1.2" fill="#f8a098" /><ellipse cx="60" cy="279" rx="5" ry="2.5" fill="#48a030" /><ellipse cx="60" cy="276" rx="5" ry="4" fill="#e04840" /><ellipse cx="59" cy="274.5" rx="2" ry="1.2" fill="#f8a098" /><ellipse cx="88" cy="269" rx="5" ry="2.5" fill="#48a030" /><ellipse cx="88" cy="266" rx="5" ry="4" fill="#e04840" /><ellipse cx="87" cy="264.5" rx="2" ry="1.2" fill="#f8a098" /><ellipse cx="100" cy="275" rx="5" ry="2.5" fill="#48a030" /><ellipse cx="100" cy="272" rx="5" ry="4" fill="#e04840" /><ellipse cx="99" cy="270.5" rx="2" ry="1.2" fill="#f8a098" /><ellipse cx="126" cy="275" rx="5" ry="2.5" fill="#48a030" /><ellipse cx="126" cy="272" rx="5" ry="4" fill="#e04840" /><ellipse cx="125" cy="270.5" rx="2" ry="1.2" fill="#f8a098" /><ellipse cx="161" cy="271" rx="5" ry="2.5" fill="#48a030" /><ellipse cx="161" cy="268" rx="5" ry="4" fill="#e04840" /><ellipse cx="160" cy="266.5" rx="2" ry="1.2" fill="#f8a098" /><ellipse cx="168" cy="277" rx="5" ry="2.5" fill="#48a030" /><ellipse cx="168" cy="274" rx="5" ry="4" fill="#e04840" /><ellipse cx="167" cy="272.5" rx="2" ry="1.2" fill="#f8a098" /><ellipse cx="156" cy="285" rx="5" ry="2.5" fill="#48a030" /><ellipse cx="156" cy="282" rx="5" ry="4" fill="#e04840" /><ellipse cx="155" cy="280.5" rx="2" ry="1.2" fill="#f8a098" /><rect x="177" y="285" width="76" height="10" fill="#2458b0" /><path d="M177 295 q5 5 10 0 z" fill="#2458b0" stroke="#58a8f0" stroke-width="1.1"/><path d="M191 295 q5 5 10 0 z" fill="#2458b0" stroke="#58a8f0" stroke-width="1.1"/><path d="M205 295 q5 5 10 0 z" fill="#2458b0" stroke="#58a8f0" stroke-width="1.1"/><path d="M219 295 q5 5 10 0 z" fill="#2458b0" stroke="#58a8f0" stroke-width="1.1"/><path d="M233 295 q5 5 10 0 z" fill="#2458b0" stroke="#58a8f0" stroke-width="1.1"/><rect x="180" y="284" width="4" height="11" fill="#b88850" /><rect x="209" y="284" width="4" height="11" fill="#b88850" /><rect x="238" y="284" width="4" height="11" fill="#b88850" /><rect x="175" y="256" width="82" height="29" fill="#ecd0a0" /><rect x="175" y="282" width="82" height="3.5" fill="#c8a070" /><rect x="181.0" y="257" width="1" height="25" fill="#d0b080" /><rect x="194.5" y="257" width="1" height="25" fill="#d0b080" /><rect x="208.0" y="257" width="1" height="25" fill="#d0b080" /><rect x="221.5" y="257" width="1" height="25" fill="#d0b080" /><rect x="235.0" y="257" width="1" height="25" fill="#d0b080" /><rect x="248.5" y="257" width="1" height="25" fill="#d0b080" /><rect x="178" y="251" width="8" height="13" fill="#f0dcb0" rx="3.5" stroke="#b89060" stroke-width="1"/><rect x="180.5" y="257" width="3" height="5" fill="#c8a070" rx="1"/><rect x="178" y="270" width="8" height="12" fill="#f0dcb0" rx="3.5" stroke="#b89060" stroke-width="1"/><rect x="180.5" y="276" width="3" height="5" fill="#c8a070" rx="1"/><rect x="207" y="251" width="8" height="13" fill="#f0dcb0" rx="3.5" stroke="#b89060" stroke-width="1"/><rect x="209.5" y="257" width="3" height="5" fill="#c8a070" rx="1"/><rect x="207" y="270" width="8" height="12" fill="#f0dcb0" rx="3.5" stroke="#b89060" stroke-width="1"/><rect x="209.5" y="276" width="3" height="5" fill="#c8a070" rx="1"/><rect x="236" y="251" width="8" height="13" fill="#f0dcb0" rx="3.5" stroke="#b89060" stroke-width="1"/><rect x="238.5" y="257" width="3" height="5" fill="#c8a070" rx="1"/><rect x="236" y="270" width="8" height="12" fill="#f0dcb0" rx="3.5" stroke="#b89060" stroke-width="1"/><rect x="238.5" y="276" width="3" height="5" fill="#c8a070" rx="1"/><ellipse cx="295.5" cy="309.5" rx="17" ry="6.5" fill="#186060" /><rect x="291" y="294" width="9" height="16" fill="#c06820" /><polygon points="290,248 300,248 309.4,258 310,266.4 317.7,274.5 317.7,285.4 308.6,294.2 298.4,296.4 290.4,296.4 281.6,292 274.3,284.7 274.3,270.8 282,263.5 282.7,256.2" fill="#68c418" stroke="#1c6048" stroke-width="1.4" stroke-linejoin="round"/><polygon points="275,284 284,288 296,285 308,288 317,284 317,285.4 308.6,293.6 298.4,295.6 290.4,295.6 281.6,291.4 275,284.7" fill="#5a9c18" /><ellipse cx="296" cy="264" rx="9" ry="8" fill="#84dc3c" /><ellipse cx="286" cy="277" rx="5" ry="4" fill="#7cd430" /><ellipse cx="304" cy="278" rx="6" ry="4" fill="#7cd430" /><path d="M4 300 L16 297 L26 306 L44 302 L56 296 L68 298 L70 318 L66 334 L70 346 L62 354 L52 350 L40 362 L30 364 L22 354 L14 350 L16 330 L10 318 Z" fill="#2860b8"/><rect x="22" y="318" width="30" height="1.5" fill="#4080d8" /><rect x="16" y="332" width="22" height="1.5" fill="#4080d8" /><rect x="30" y="340" width="26" height="1.5" fill="#4080d8" /><rect x="24" y="350" width="16" height="1.5" fill="#4080d8" /><path d="M80 312 L88 308 L94 314 L96 304 L102 304 L102 316 L112 322 L110 332 L104 330 L98 335 L90 334 L88 324 Z" fill="#2860b8"/><rect x="132" y="296" width="39" height="37" fill="#187850" rx="5"/><rect x="131" y="299" width="41" height="30" fill="#187850" rx="3"/><ellipse cx="144.2" cy="318.1" rx="2.6" ry="2.3" fill="#0c6444" /><ellipse cx="154.3" cy="307.7" rx="2.6" ry="2.3" fill="#28985c" /><ellipse cx="138.3" cy="308.2" rx="2.6" ry="2.3" fill="#28985c" /><ellipse cx="146.5" cy="309.6" rx="2.6" ry="2.3" fill="#107048" /><ellipse cx="156.8" cy="325.5" rx="2.6" ry="2.3" fill="#30a868" /><ellipse cx="143.0" cy="312.3" rx="2.6" ry="2.3" fill="#107048" /><ellipse cx="149.4" cy="324.9" rx="2.6" ry="2.3" fill="#28985c" /><ellipse cx="138.5" cy="301.5" rx="2.6" ry="2.3" fill="#30a868" /><ellipse cx="140.4" cy="328.7" rx="2.6" ry="2.3" fill="#28985c" /><ellipse cx="164.9" cy="298.1" rx="2.6" ry="2.3" fill="#0c6444" /><ellipse cx="158.9" cy="305.0" rx="2.6" ry="2.3" fill="#28985c" /><ellipse cx="159.9" cy="301.4" rx="2.6" ry="2.3" fill="#107048" /><ellipse cx="151.0" cy="305.9" rx="2.6" ry="2.3" fill="#107048" /><ellipse cx="140.4" cy="311.8" rx="2.6" ry="2.3" fill="#30a868" /><ellipse cx="152.4" cy="301.3" rx="2.6" ry="2.3" fill="#28985c" /><ellipse cx="144.9" cy="326.1" rx="2.6" ry="2.3" fill="#0c6444" /><ellipse cx="153.1" cy="318.2" rx="2.6" ry="2.3" fill="#0c6444" /><ellipse cx="157.9" cy="306.3" rx="2.6" ry="2.3" fill="#28985c" /><ellipse cx="149.9" cy="297.8" rx="2.6" ry="2.3" fill="#30a868" /><ellipse cx="142.2" cy="303.6" rx="2.6" ry="2.3" fill="#0c6444" /><ellipse cx="147.4" cy="304.6" rx="2.6" ry="2.3" fill="#28985c" /><ellipse cx="158.9" cy="319.8" rx="2.6" ry="2.3" fill="#30a868" /><ellipse cx="158.4" cy="302.2" rx="2.6" ry="2.3" fill="#30a868" /><ellipse cx="141.6" cy="315.0" rx="2.6" ry="2.3" fill="#30a868" /><ellipse cx="135.6" cy="318.8" rx="2.6" ry="2.3" fill="#28985c" /><ellipse cx="139.9" cy="308.2" rx="2.6" ry="2.3" fill="#107048" /><ellipse cx="163.4" cy="306.6" rx="2.6" ry="2.3" fill="#30a868" /><ellipse cx="142.6" cy="302.0" rx="2.6" ry="2.3" fill="#0c6444" /><ellipse cx="168.7" cy="327.4" rx="2.6" ry="2.3" fill="#107048" /><ellipse cx="157.1" cy="305.5" rx="2.6" ry="2.3" fill="#107048" /><ellipse cx="149.8" cy="320.5" rx="2.6" ry="2.3" fill="#0c6444" /><ellipse cx="166.1" cy="297.1" rx="2.6" ry="2.3" fill="#28985c" /><ellipse cx="150.9" cy="299.0" rx="2.6" ry="2.3" fill="#28985c" /><ellipse cx="149.0" cy="323.2" rx="2.6" ry="2.3" fill="#0c6444" /><ellipse cx="146.6" cy="306.1" rx="2.6" ry="2.3" fill="#107048" /><ellipse cx="139.1" cy="325.7" rx="2.6" ry="2.3" fill="#30a868" /><ellipse cx="166.0" cy="323.6" rx="2.6" ry="2.3" fill="#28985c" /><ellipse cx="152.6" cy="318.3" rx="2.6" ry="2.3" fill="#0c6444" /><ellipse cx="153.9" cy="301.9" rx="2.6" ry="2.3" fill="#30a868" /><ellipse cx="134.6" cy="322.7" rx="2.6" ry="2.3" fill="#107048" /><ellipse cx="139.4" cy="306.4" rx="2.6" ry="2.3" fill="#0c6444" /><ellipse cx="145.5" cy="313.7" rx="2.6" ry="2.3" fill="#107048" /><ellipse cx="163.5" cy="311.3" rx="2.6" ry="2.3" fill="#107048" /><rect x="176" y="306" width="31" height="28" fill="#187850" rx="5"/><rect x="175" y="309" width="33" height="21" fill="#187850" rx="3"/><ellipse cx="187.0" cy="320.1" rx="2.6" ry="2.3" fill="#30a868" /><ellipse cx="190.0" cy="326.3" rx="2.6" ry="2.3" fill="#30a868" /><ellipse cx="194.9" cy="317.7" rx="2.6" ry="2.3" fill="#30a868" /><ellipse cx="185.6" cy="324.4" rx="2.6" ry="2.3" fill="#0c6444" /><ellipse cx="194.0" cy="328.7" rx="2.6" ry="2.3" fill="#0c6444" /><ellipse cx="181.9" cy="316.5" rx="2.6" ry="2.3" fill="#107048" /><ellipse cx="180.0" cy="317.2" rx="2.6" ry="2.3" fill="#107048" /><ellipse cx="197.7" cy="323.7" rx="2.6" ry="2.3" fill="#0c6444" /><ellipse cx="180.4" cy="316.9" rx="2.6" ry="2.3" fill="#30a868" /><ellipse cx="193.5" cy="314.7" rx="2.6" ry="2.3" fill="#0c6444" /><ellipse cx="191.6" cy="327.9" rx="2.6" ry="2.3" fill="#0c6444" /><ellipse cx="184.5" cy="309.7" rx="2.6" ry="2.3" fill="#30a868" /><ellipse cx="184.4" cy="323.9" rx="2.6" ry="2.3" fill="#30a868" /><ellipse cx="196.9" cy="320.2" rx="2.6" ry="2.3" fill="#30a868" /><ellipse cx="197.6" cy="330.6" rx="2.6" ry="2.3" fill="#0c6444" /><ellipse cx="182.5" cy="311.7" rx="2.6" ry="2.3" fill="#0c6444" /><ellipse cx="182.3" cy="318.7" rx="2.6" ry="2.3" fill="#28985c" /><ellipse cx="181.4" cy="321.6" rx="2.6" ry="2.3" fill="#0c6444" /><ellipse cx="186.2" cy="317.1" rx="2.6" ry="2.3" fill="#107048" /><ellipse cx="194.5" cy="309.4" rx="2.6" ry="2.3" fill="#107048" /><ellipse cx="202.6" cy="325.3" rx="2.6" ry="2.3" fill="#107048" /><ellipse cx="190.9" cy="330.6" rx="2.6" ry="2.3" fill="#30a868" /><ellipse cx="180.3" cy="325.2" rx="2.6" ry="2.3" fill="#28985c" /><ellipse cx="196.1" cy="317.4" rx="2.6" ry="2.3" fill="#107048" /><ellipse cx="178.6" cy="324.8" rx="2.6" ry="2.3" fill="#28985c" /><ellipse cx="194.1" cy="328.8" rx="2.6" ry="2.3" fill="#30a868" /><ellipse cx="240" cy="340" rx="27" ry="7" fill="#50a830" /><path d="M214 336 L218 322 L244 314 L262 318 L266 334 L248 346 L226 346 Z" fill="#e8cc90" stroke="#b89050" stroke-width="1"/><polygon points="226,346 248,346 266,334 262,326 240,332 224,332" fill="#c8a060" /><g transform="translate(278,326)"><path d="M6 68 L44 70 L50 62 L50 52 L44 50 L46 14 C44 2 30 0 18 1 C6 3 2 10 2 22 L6 68 Z" fill="#7a7e80"/><path d="M6 66 L38 68 L40 16 C38 6 28 4 18 5 C8 7 4 12 4 22 Z" fill="#95999b"/><rect x="10" y="32" width="26" height="28" fill="#818587" rx="2"/><rect x="13" y="37" width="20" height="3" fill="#95999b" /><rect x="13" y="44" width="20" height="3" fill="#95999b" /><rect x="13" y="51" width="16" height="3" fill="#95999b" /><path d="M10 18 l5 6 l5 -7 l6 7 l6 -8" fill="none" stroke="#7a7e80" stroke-width="2.4"/></g><g transform="translate(82,344)"><path d="M16 64 C28 82 60 80 80 60 C88 52 93 44 94 34" fill="none" stroke="#58a8f0" stroke-width="1.4"/><path d="M20 72 C36 82 58 80 72 68 M84 62 C90 54 94 46 95 40" fill="none" stroke="#78b8f8" stroke-width="1.1"/><polygon points="0,47.5 5.7,46.5 7.9,41 21,34 32,36.5 43.4,34 47.9,24 63.4,17.5 74.5,12 89,18.7 90,37.5 79,55 61,70 41,74 23.4,66 19,53 0,51.5" fill="#a87848" stroke="#181008" stroke-width="2" stroke-linejoin="round"/><polygon points="2,48 8,43 21,36.5 32,39 43,37 47,44 36,50 20,50" fill="#d8b078" /><polygon points="0,48 18,48 18,51.5 0,51.5" fill="#6c4828" /><polygon points="50,26 63.4,19.5 74.5,14.5 87,20 87,30 70,42 52,46" fill="#c89860" /><polygon points="64,17 75,13.5 87,19 80,24 68,22" fill="#e4bc84" /><polygon points="22,55 40,58 62,52 80,40 78,52 61,66 41,70 25,63" fill="#8c6038" /><path d="M52 40 L58 30 M60 44 L66 32 M68 42 L74 28 M76 36 L82 24 M26 60 L62 58 L82 44" fill="none" stroke="#5c3c1c" stroke-width="1.2"/><ellipse cx="40" cy="63" rx="2" ry="2" fill="#f0e8e0" /><rect x="45.3" y="8" width="3" height="38" fill="#c09060" stroke="#402810" stroke-width=".9"/><ellipse cx="46.8" cy="4.5" rx="4.6" ry="4.6" fill="#d8b078" stroke="#402810" stroke-width="1.2"/><polygon points="25.5,5.5 28.5,3.2 67,30 64.5,33.5" fill="#f8f8f8" stroke="#202020" stroke-width="1"/></g></svg></div>
</div>
<div class="t" style="left:4px;top:519px;">This parameter is common to all banks</div>
<div class="btn" style="left:307px;top:517px;width:80px;height:20px;line-height:18px;">Grid</div>
<div class="t" style="left:21px;top:548px;">Tip size(pixels)</div>
<div class="inp" style="left:11px;top:566px;width:60px;height:20px;line-height:17px;">16</div>
<div class="inp" style="left:76px;top:566px;width:60px;height:20px;line-height:17px;">16</div>
<div class="btn" style="left:161px;top:566px;width:80px;height:20px;line-height:18px;">Apply</div>
<div class="t" style="left:161px;top:590px;">Push the apply button</div>
<div class="t" style="left:161px;top:606px;letter-spacing:.33px">to reflect the parameter</div>
<div class="t" style="left:21px;top:598px;">Map size(tips)</div>
<div class="inp" style="left:11px;top:616px;width:60px;height:20px;line-height:17px;">32</div>
<div class="inp" style="left:76px;top:616px;width:60px;height:20px;line-height:17px;">256</div>
<div class="t" style="left:21px;top:658px;">Move all map tips</div>
<div class="inp" style="left:11px;top:676px;width:60px;height:20px;line-height:17px;">0</div>
<div class="inp" style="left:76px;top:676px;width:60px;height:20px;line-height:17px;">0</div>
<div class="btn" style="left:161px;top:676px;width:80px;height:20px;line-height:18px;">Move</div>
</div>
<div class="a" style="left:390px;top:81px;width:4px;height:707px;background:#f2f2f2;"></div>
<div class="a" style="left:393px;top:81px;width:2px;height:707px;background:#c6c6c6;"></div>
<div class="a" style="left:396px;top:81px;width:559px;height:707px;overflow:hidden">
<div class="btn" style="left:0px;top:0px;width:60px;height:23px;line-height:21px;">Set</div>
<div class="btn" style="left:60px;top:0px;width:60px;height:23px;line-height:21px;">Set2</div>
<div class="btn" style="left:120px;top:0px;width:60px;height:23px;line-height:21px;">Clear</div>
<div class="btn" style="left:180px;top:0px;width:60px;height:23px;line-height:21px;">Copy</div>
<div class="btn" style="left:240px;top:0px;width:60px;height:23px;line-height:21px;">Paste</div>
<div class="btn" style="left:300px;top:0px;width:60px;height:23px;line-height:21px;">Paste2</div>
<div class="inp" style="left:360px;top:0px;width:60px;height:23px;line-height:20px;line-height:21px">70%</div>
<svg class="a" style="left:403px;top:7px" width="11" height="9"><polygon points="0,0 11,0 5.5,9" fill="#000"/></svg>
<div class="a" style="left:539px;top:24px;width:20px;height:663px;background:#e2e2e2;"></div>
<div class="a" style="left:0px;top:687px;width:559px;height:20px;background:#e6e6e6;"></div>
<svg class="a" style="left:544px;top:28px" width="10" height="9"><polygon points="0,9 5.0,0 10,9" fill="#000"/></svg>
<svg class="a" style="left:544px;top:673px" width="10" height="9"><polygon points="0,0 10,0 5.0,9" fill="#000"/></svg>
<svg class="a" style="left:3px;top:692px" width="9" height="10"><polygon points="9,0 9,10 0,5.0" fill="#000"/></svg>
<svg class="a" style="left:526px;top:692px" width="9" height="10"><polygon points="0,0 9,5.0 0,10" fill="#000"/></svg>
<div class="a" style="left:0;top:24px;width:539px;height:663px;overflow:hidden">
<svg width="538" height="664" viewBox="0 0 538 664" style="display:block;position:absolute;left:0;top:0"><rect x="89" y="0" width="1.3" height="664" fill="#484848" /><rect x="448" y="0" width="1.3" height="664" fill="#484848" /><g transform="translate(227.5,154.5) scale(.7)"><g transform="translate(0,0)"><path d="M6 68 L44 70 L50 62 L50 52 L44 50 L46 14 C44 2 30 0 18 1 C6 3 2 10 2 22 L6 68 Z" fill="#7a7e80"/><path d="M6 66 L38 68 L40 16 C38 6 28 4 18 5 C8 7 4 12 4 22 Z" fill="#95999b"/><rect x="10" y="32" width="26" height="28" fill="#818587" rx="2"/><rect x="13" y="37" width="20" height="3" fill="#95999b" /><rect x="13" y="44" width="20" height="3" fill="#95999b" /><rect x="13" y="51" width="16" height="3" fill="#95999b" /><path d="M10 18 l5 6 l5 -7 l6 7 l6 -8" fill="none" stroke="#7a7e80" stroke-width="2.4"/></g></g><g transform="translate(129.5,223) scale(.7)"><rect x="1" y="2" width="59" height="67" fill="#187850" rx="5"/><rect x="0" y="5" width="61" height="60" fill="#187850" rx="3"/><ellipse cx="49.4" cy="50.8" rx="2.6" ry="2.3" fill="#0c6444" /><ellipse cx="5.2" cy="63.8" rx="2.6" ry="2.3" fill="#0c6444" /><ellipse cx="25.3" cy="52.4" rx="2.6" ry="2.3" fill="#30a868" /><ellipse cx="56.2" cy="25.6" rx="2.6" ry="2.3" fill="#107048" /><ellipse cx="30.8" cy="20.8" rx="2.6" ry="2.3" fill="#28985c" /><ellipse cx="37.0" cy="18.8" rx="2.6" ry="2.3" fill="#107048" /><ellipse cx="20.1" cy="49.0" rx="2.6" ry="2.3" fill="#30a868" /><ellipse cx="29.0" cy="9.3" rx="2.6" ry="2.3" fill="#0c6444" /><ellipse cx="20.4" cy="43.3" rx="2.6" ry="2.3" fill="#107048" /><ellipse cx="56.2" cy="33.1" rx="2.6" ry="2.3" fill="#30a868" /><ellipse cx="6.4" cy="60.9" rx="2.6" ry="2.3" fill="#28985c" /><ellipse cx="8.1" cy="55.9" rx="2.6" ry="2.3" fill="#28985c" /><ellipse cx="36.7" cy="55.2" rx="2.6" ry="2.3" fill="#30a868" /><ellipse cx="16.4" cy="23.5" rx="2.6" ry="2.3" fill="#28985c" /><ellipse cx="13.5" cy="38.8" rx="2.6" ry="2.3" fill="#107048" /><ellipse cx="47.2" cy="12.0" rx="2.6" ry="2.3" fill="#0c6444" /><ellipse cx="8.0" cy="65.6" rx="2.6" ry="2.3" fill="#0c6444" /><ellipse cx="9.0" cy="37.7" rx="2.6" ry="2.3" fill="#28985c" /><ellipse cx="33.1" cy="54.3" rx="2.6" ry="2.3" fill="#107048" /><ellipse cx="56.0" cy="41.0" rx="2.6" ry="2.3" fill="#30a868" /><ellipse cx="27.5" cy="40.6" rx="2.6" ry="2.3" fill="#0c6444" /><ellipse cx="20.4" cy="18.3" rx="2.6" ry="2.3" fill="#107048" /><ellipse cx="13.4" cy="14.8" rx="2.6" ry="2.3" fill="#30a868" /><ellipse cx="29.2" cy="8.7" rx="2.6" ry="2.3" fill="#107048" /><ellipse cx="51.2" cy="61.2" rx="2.6" ry="2.3" fill="#28985c" /><ellipse cx="52.4" cy="61.2" rx="2.6" ry="2.3" fill="#0c6444" /><ellipse cx="49.1" cy="36.0" rx="2.6" ry="2.3" fill="#107048" /><ellipse cx="49.7" cy="59.4" rx="2.6" ry="2.3" fill="#0c6444" /><ellipse cx="34.9" cy="31.4" rx="2.6" ry="2.3" fill="#30a868" /><ellipse cx="7.5" cy="41.6" rx="2.6" ry="2.3" fill="#0c6444" /><ellipse cx="35.3" cy="24.1" rx="2.6" ry="2.3" fill="#107048" /><ellipse cx="16.4" cy="49.1" rx="2.6" ry="2.3" fill="#28985c" /><ellipse cx="41.8" cy="26.4" rx="2.6" ry="2.3" fill="#107048" /><ellipse cx="21.3" cy="54.4" rx="2.6" ry="2.3" fill="#28985c" /><ellipse cx="46.1" cy="56.9" rx="2.6" ry="2.3" fill="#107048" /><ellipse cx="5.5" cy="39.2" rx="2.6" ry="2.3" fill="#28985c" /><ellipse cx="4.5" cy="43.0" rx="2.6" ry="2.3" fill="#28985c" /><ellipse cx="24.5" cy="26.3" rx="2.6" ry="2.3" fill="#28985c" /><ellipse cx="5.0" cy="4.4" rx="2.6" ry="2.3" fill="#107048" /><ellipse cx="42.5" cy="33.2" rx="2.6" ry="2.3" fill="#28985c" /><ellipse cx="54.5" cy="4.4" rx="2.6" ry="2.3" fill="#0c6444" /><ellipse cx="37.1" cy="55.7" rx="2.6" ry="2.3" fill="#28985c" /><ellipse cx="15.1" cy="43.8" rx="2.6" ry="2.3" fill="#30a868" /><ellipse cx="27.0" cy="6.8" rx="2.6" ry="2.3" fill="#0c6444" /><ellipse cx="5.2" cy="9.4" rx="2.6" ry="2.3" fill="#0c6444" /><ellipse cx="14.0" cy="25.6" rx="2.6" ry="2.3" fill="#0c6444" /><ellipse cx="49.1" cy="60.9" rx="2.6" ry="2.3" fill="#107048" /><ellipse cx="41.4" cy="15.8" rx="2.6" ry="2.3" fill="#28985c" /><ellipse cx="46.4" cy="13.0" rx="2.6" ry="2.3" fill="#107048" /><ellipse cx="21.8" cy="18.8" rx="2.6" ry="2.3" fill="#0c6444" /><ellipse cx="39.6" cy="3.8" rx="2.6" ry="2.3" fill="#0c6444" /><ellipse cx="52.5" cy="58.1" rx="2.6" ry="2.3" fill="#30a868" /><ellipse cx="38.7" cy="27.5" rx="2.6" ry="2.3" fill="#30a868" /><ellipse cx="11.4" cy="46.5" rx="2.6" ry="2.3" fill="#0c6444" /><ellipse cx="43.8" cy="24.2" rx="2.6" ry="2.3" fill="#28985c" /><ellipse cx="32.9" cy="11.5" rx="2.6" ry="2.3" fill="#0c6444" /><ellipse cx="22.4" cy="21.1" rx="2.6" ry="2.3" fill="#30a868" /><ellipse cx="35.5" cy="59.2" rx="2.6" ry="2.3" fill="#107048" /><ellipse cx="42.4" cy="27.4" rx="2.6" ry="2.3" fill="#0c6444" /><ellipse cx="48.6" cy="8.1" rx="2.6" ry="2.3" fill="#107048" /><ellipse cx="41.4" cy="13.1" rx="2.6" ry="2.3" fill="#107048" /><ellipse cx="38.1" cy="26.9" rx="2.6" ry="2.3" fill="#0c6444" /><ellipse cx="4.7" cy="57.9" rx="2.6" ry="2.3" fill="#0c6444" /><ellipse cx="45.5" cy="47.7" rx="2.6" ry="2.3" fill="#107048" /><ellipse cx="27.5" cy="19.3" rx="2.6" ry="2.3" fill="#107048" /><ellipse cx="27.6" cy="58.8" rx="2.6" ry="2.3" fill="#28985c" /><ellipse cx="51.6" cy="34.2" rx="2.6" ry="2.3" fill="#30a868" /><ellipse cx="49.1" cy="6.1" rx="2.6" ry="2.3" fill="#0c6444" /><ellipse cx="13.3" cy="66.0" rx="2.6" ry="2.3" fill="#28985c" /><ellipse cx="49.1" cy="11.2" rx="2.6" ry="2.3" fill="#28985c" /><ellipse cx="25.1" cy="45.7" rx="2.6" ry="2.3" fill="#30a868" /><ellipse cx="3.2" cy="3.9" rx="2.6" ry="2.3" fill="#28985c" /><ellipse cx="56.9" cy="45.6" rx="2.6" ry="2.3" fill="#28985c" /><ellipse cx="13.5" cy="41.3" rx="2.6" ry="2.3" fill="#107048" /><ellipse cx="51.1" cy="20.6" rx="2.6" ry="2.3" fill="#107048" /><ellipse cx="8.5" cy="56.8" rx="2.6" ry="2.3" fill="#0c6444" /><ellipse cx="37.5" cy="4.4" rx="2.6" ry="2.3" fill="#0c6444" /><ellipse cx="47.0" cy="10.3" rx="2.6" ry="2.3" fill="#30a868" /><ellipse cx="10.3" cy="35.8" rx="2.6" ry="2.3" fill="#30a868" /><ellipse cx="9.3" cy="12.7" rx="2.6" ry="2.3" fill="#28985c" /><ellipse cx="5.3" cy="16.0" rx="2.6" ry="2.3" fill="#30a868" /><ellipse cx="33.7" cy="62.6" rx="2.6" ry="2.3" fill="#28985c" /><ellipse cx="49.5" cy="63.6" rx="2.6" ry="2.3" fill="#0c6444" /><ellipse cx="42.2" cy="59.9" rx="2.6" ry="2.3" fill="#0c6444" /><ellipse cx="23.5" cy="36.9" rx="2.6" ry="2.3" fill="#107048" /><ellipse cx="23.7" cy="21.3" rx="2.6" ry="2.3" fill="#107048" /><ellipse cx="11.3" cy="24.0" rx="2.6" ry="2.3" fill="#30a868" /><ellipse cx="42.5" cy="24.3" rx="2.6" ry="2.3" fill="#28985c" /><ellipse cx="5.3" cy="13.3" rx="2.6" ry="2.3" fill="#30a868" /><ellipse cx="22.8" cy="65.3" rx="2.6" ry="2.3" fill="#107048" /><ellipse cx="19.1" cy="33.1" rx="2.6" ry="2.3" fill="#107048" /><ellipse cx="54.4" cy="22.4" rx="2.6" ry="2.3" fill="#28985c" /><ellipse cx="19.6" cy="55.6" rx="2.6" ry="2.3" fill="#30a868" /><ellipse cx="25.8" cy="9.3" rx="2.6" ry="2.3" fill="#0c6444" /><ellipse cx="29.1" cy="56.0" rx="2.6" ry="2.3" fill="#30a868" /><ellipse cx="9.8" cy="10.3" rx="2.6" ry="2.3" fill="#0c6444" /><ellipse cx="26.5" cy="22.0" rx="2.6" ry="2.3" fill="#107048" /><ellipse cx="53.6" cy="42.5" rx="2.6" ry="2.3" fill="#0c6444" /><ellipse cx="47.3" cy="65.5" rx="2.6" ry="2.3" fill="#28985c" /><ellipse cx="6.6" cy="8.3" rx="2.6" ry="2.3" fill="#107048" /><ellipse cx="6.4" cy="3.5" rx="2.6" ry="2.3" fill="#0c6444" /><ellipse cx="33.6" cy="21.3" rx="2.6" ry="2.3" fill="#0c6444" /><ellipse cx="46.4" cy="48.0" rx="2.6" ry="2.3" fill="#107048" /><ellipse cx="26.3" cy="26.2" rx="2.6" ry="2.3" fill="#30a868" /><ellipse cx="35.2" cy="13.5" rx="2.6" ry="2.3" fill="#107048" /><ellipse cx="22.7" cy="7.0" rx="2.6" ry="2.3" fill="#28985c" /><ellipse cx="52.7" cy="31.5" rx="2.6" ry="2.3" fill="#107048" /><ellipse cx="9.5" cy="28.1" rx="2.6" ry="2.3" fill="#107048" /><ellipse cx="38.3" cy="65.8" rx="2.6" ry="2.3" fill="#107048" /><ellipse cx="37.3" cy="9.6" rx="2.6" ry="2.3" fill="#0c6444" /><ellipse cx="23.8" cy="37.4" rx="2.6" ry="2.3" fill="#107048" /><ellipse cx="8.8" cy="40.6" rx="2.6" ry="2.3" fill="#0c6444" /></g><rect x="179" y="235.5" width="1" height="14" fill="#58a8a0" /><defs><pattern id="gr2" x="91" y="318" width="44.8" height="24" patternUnits="userSpaceOnUse"><rect x="0" y="0" width="44.8" height="24" fill="#44ac30" /><path d="M-2 22 L20 0 M10 26 L36 0 M26 26 L48 4 M-6 10 L6 -2" stroke="#54bc3c" stroke-width="3.2"/><path d="M4 26 L30 0 M20 26 L46 0" stroke="#3a9c28" stroke-width="1.4"/></pattern></defs><rect x="91" y="318" width="357" height="24" fill="url(#gr2)" /><rect x="91" y="318" width="357" height="1" fill="#58b840" /><rect x="91" y="341.5" width="357" height="2" fill="#70c038" /><rect x="91" y="343" width="357" height="6" fill="#94561c" /><rect x="91" y="349" width="357" height="1" fill="#a8d0f0" /><g transform="translate(91,450) scale(.7)"><svg x="0" y="0" width="510" height="48" viewBox="0 0 510 48"><rect x="2" y="34" width="76" height="10" fill="#2458b0" /><path d="M2 44 q5 5 10 0 z" fill="#2458b0" stroke="#58a8f0" stroke-width="1.1"/><path d="M16 44 q5 5 10 0 z" fill="#2458b0" stroke="#58a8f0" stroke-width="1.1"/><path d="M30 44 q5 5 10 0 z" fill="#2458b0" stroke="#58a8f0" stroke-width="1.1"/><path d="M44 44 q5 5 10 0 z" fill="#2458b0" stroke="#58a8f0" stroke-width="1.1"/><path d="M58 44 q5 5 10 0 z" fill="#2458b0" stroke="#58a8f0" stroke-width="1.1"/><rect x="82" y="34" width="76" height="10" fill="#2458b0" /><path d="M82 44 q5 5 10 0 z" fill="#2458b0" stroke="#58a8f0" stroke-width="1.1"/><path d="M96 44 q5 5 10 0 z" fill="#2458b0" stroke="#58a8f0" stroke-width="1.1"/><path d="M110 44 q5 5 10 0 z" fill="#2458b0" stroke="#58a8f0" stroke-width="1.1"/><path d="M124 44 q5 5 10 0 z" fill="#2458b0" stroke="#58a8f0" stroke-width="1.1"/><path d="M138 44 q5 5 10 0 z" fill="#2458b0" stroke="#58a8f0" stroke-width="1.1"/><rect x="162" y="34" width="76" height="10" fill="#2458b0" /><path d="M162 44 q5 5 10 0 z" fill="#2458b0" stroke="#58a8f0" stroke-width="1.1"/><path d="M176 44 q5 5 10 0 z" fill="#2458b0" stroke="#58a8f0" stroke-width="1.1"/><path d="M190 44 q5 5 10 0 z" fill="#2458b0" stroke="#58a8f0" stroke-width="1.1"/><path d="M204 44 q5 5 10 0 z" fill="#2458b0" stroke="#58a8f0" stroke-width="1.1"/><path d="M218 44 q5 5 10 0 z" fill="#2458b0" stroke="#58a8f0" stroke-width="1.1"/><rect x="242" y="34" width="76" height="10" fill="#2458b0" /><path d="M242 44 q5 5 10 0 z" fill="#2458b0" stroke="#58a8f0" stroke-width="1.1"/><path d="M256 44 q5 5 10 0 z" fill="#2458b0" stroke="#58a8f0" stroke-width="1.1"/><path d="M270 44 q5 5 10 0 z" fill="#2458b0" stroke="#58a8f0" stroke-width="1.1"/><path d="M284 44 q5 5 10 0 z" fill="#2458b0" stroke="#58a8f0" stroke-width="1.1"/><path d="M298 44 q5 5 10 0 z" fill="#2458b0" stroke="#58a8f0" stroke-width="1.1"/><rect x="322" y="34" width="76" height="10" fill="#2458b0" /><path d="M322 44 q5 5 10 0 z" fill="#2458b0" stroke="#58a8f0" stroke-width="1.1"/><path d="M336 44 q5 5 10 0 z" fill="#2458b0" stroke="#58a8f0" stroke-width="1.1"/><path d="M350 44 q5 5 10 0 z" fill="#2458b0" stroke="#58a8f0" stroke-width="1.1"/><path d="M364 44 q5 5 10 0 z" fill="#2458b0" stroke="#58a8f0" stroke-width="1.1"/><path d="M378 44 q5 5 10 0 z" fill="#2458b0" stroke="#58a8f0" stroke-width="1.1"/><rect x="402" y="34" width="76" height="10" fill="#2458b0" /><path d="M402 44 q5 5 10 0 z" fill="#2458b0" stroke="#58a8f0" stroke-width="1.1"/><path d="M416 44 q5 5 10 0 z" fill="#2458b0" stroke="#58a8f0" stroke-width="1.1"/><path d="M430 44 q5 5 10 0 z" fill="#2458b0" stroke="#58a8f0" stroke-width="1.1"/><path d="M444 44 q5 5 10 0 z" fill="#2458b0" stroke="#58a8f0" stroke-width="1.1"/><path d="M458 44 q5 5 10 0 z" fill="#2458b0" stroke="#58a8f0" stroke-width="1.1"/><rect x="482" y="34" width="28" height="10" fill="#2458b0" /><path d="M482 44 q5 5 10 0 z" fill="#2458b0" stroke="#58a8f0" stroke-width="1.1"/><path d="M496 44 q5 5 10 0 z" fill="#2458b0" stroke="#58a8f0" stroke-width="1.1"/><rect x="5" y="33" width="4" height="11" fill="#b88850" /><rect x="34" y="33" width="4" height="11" fill="#b88850" /><rect x="63" y="33" width="4" height="11" fill="#b88850" /><rect x="85" y="33" width="4" height="11" fill="#b88850" /><rect x="114" y="33" width="4" height="11" fill="#b88850" /><rect x="143" y="33" width="4" height="11" fill="#b88850" /><rect x="165" y="33" width="4" height="11" fill="#b88850" /><rect x="194" y="33" width="4" height="11" fill="#b88850" /><rect x="223" y="33" width="4" height="11" fill="#b88850" /><rect x="245" y="33" width="4" height="11" fill="#b88850" /><rect x="274" y="33" width="4" height="11" fill="#b88850" /><rect x="303" y="33" width="4" height="11" fill="#b88850" /><rect x="325" y="33" width="4" height="11" fill="#b88850" /><rect x="354" y="33" width="4" height="11" fill="#b88850" /><rect x="383" y="33" width="4" height="11" fill="#b88850" /><rect x="405" y="33" width="4" height="11" fill="#b88850" /><rect x="434" y="33" width="4" height="11" fill="#b88850" /><rect x="463" y="33" width="4" height="11" fill="#b88850" /><rect x="485" y="33" width="4" height="11" fill="#b88850" /><rect x="0" y="5" width="510" height="29" fill="#ecd0a0" /><rect x="0" y="31" width="510" height="3.5" fill="#c8a070" /><rect x="6.0" y="6" width="1" height="25" fill="#d0b080" /><rect x="19.5" y="6" width="1" height="25" fill="#d0b080" /><rect x="33.0" y="6" width="1" height="25" fill="#d0b080" /><rect x="46.5" y="6" width="1" height="25" fill="#d0b080" /><rect x="60.0" y="6" width="1" height="25" fill="#d0b080" /><rect x="73.5" y="6" width="1" height="25" fill="#d0b080" /><rect x="87.0" y="6" width="1" height="25" fill="#d0b080" /><rect x="100.5" y="6" width="1" height="25" fill="#d0b080" /><rect x="114.0" y="6" width="1" height="25" fill="#d0b080" /><rect x="127.5" y="6" width="1" height="25" fill="#d0b080" /><rect x="141.0" y="6" width="1" height="25" fill="#d0b080" /><rect x="154.5" y="6" width="1" height="25" fill="#d0b080" /><rect x="168.0" y="6" width="1" height="25" fill="#d0b080" /><rect x="181.5" y="6" width="1" height="25" fill="#d0b080" /><rect x="195.0" y="6" width="1" height="25" fill="#d0b080" /><rect x="208.5" y="6" width="1" height="25" fill="#d0b080" /><rect x="222.0" y="6" width="1" height="25" fill="#d0b080" /><rect x="235.5" y="6" width="1" height="25" fill="#d0b080" /><rect x="249.0" y="6" width="1" height="25" fill="#d0b080" /><rect x="262.5" y="6" width="1" height="25" fill="#d0b080" /><rect x="276.0" y="6" width="1" height="25" fill="#d0b080" /><rect x="289.5" y="6" width="1" height="25" fill="#d0b080" /><rect x="303.0" y="6" width="1" height="25" fill="#d0b080" /><rect x="316.5" y="6" width="1" height="25" fill="#d0b080" /><rect x="330.0" y="6" width="1" height="25" fill="#d0b080" /><rect x="343.5" y="6" width="1" height="25" fill="#d0b080" /><rect x="357.0" y="6" width="1" height="25" fill="#d0b080" /><rect x="370.5" y="6" width="1" height="25" fill="#d0b080" /><rect x="384.0" y="6" width="1" height="25" fill="#d0b080" /><rect x="397.5" y="6" width="1" height="25" fill="#d0b080" /><rect x="411.0" y="6" width="1" height="25" fill="#d0b080" /><rect x="424.5" y="6" width="1" height="25" fill="#d0b080" /><rect x="438.0" y="6" width="1" height="25" fill="#d0b080" /><rect x="451.5" y="6" width="1" height="25" fill="#d0b080" /><rect x="465.0" y="6" width="1" height="25" fill="#d0b080" /><rect x="478.5" y="6" width="1" height="25" fill="#d0b080" /><rect x="492.0" y="6" width="1" height="25" fill="#d0b080" /><rect x="505.5" y="6" width="1" height="25" fill="#d0b080" /><rect x="3" y="0" width="8" height="13" fill="#f0dcb0" rx="3.5" stroke="#b89060" stroke-width="1"/><rect x="5.5" y="6" width="3" height="5" fill="#c8a070" rx="1"/><rect x="3" y="19" width="8" height="12" fill="#f0dcb0" rx="3.5" stroke="#b89060" stroke-width="1"/><rect x="5.5" y="25" width="3" height="5" fill="#c8a070" rx="1"/><rect x="32" y="0" width="8" height="13" fill="#f0dcb0" rx="3.5" stroke="#b89060" stroke-width="1"/><rect x="34.5" y="6" width="3" height="5" fill="#c8a070" rx="1"/><rect x="32" y="19" width="8" height="12" fill="#f0dcb0" rx="3.5" stroke="#b89060" stroke-width="1"/><rect x="34.5" y="25" width="3" height="5" fill="#c8a070" rx="1"/><rect x="61" y="0" width="8" height="13" fill="#f0dcb0" rx="3.5" stroke="#b89060" stroke-width="1"/><rect x="63.5" y="6" width="3" height="5" fill="#c8a070" rx="1"/><rect x="61" y="19" width="8" height="12" fill="#f0dcb0" rx="3.5" stroke="#b89060" stroke-width="1"/><rect x="63.5" y="25" width="3" height="5" fill="#c8a070" rx="1"/><rect x="83" y="0" width="8" height="13" fill="#f0dcb0" rx="3.5" stroke="#b89060" stroke-width="1"/><rect x="85.5" y="6" width="3" height="5" fill="#c8a070" rx="1"/><rect x="83" y="19" width="8" height="12" fill="#f0dcb0" rx="3.5" stroke="#b89060" stroke-width="1"/><rect x="85.5" y="25" width="3" height="5" fill="#c8a070" rx="1"/><rect x="112" y="0" width="8" height="13" fill="#f0dcb0" rx="3.5" stroke="#b89060" stroke-width="1"/><rect x="114.5" y="6" width="3" height="5" fill="#c8a070" rx="1"/><rect x="112" y="19" width="8" height="12" fill="#f0dcb0" rx="3.5" stroke="#b89060" stroke-width="1"/><rect x="114.5" y="25" width="3" height="5" fill="#c8a070" rx="1"/><rect x="141" y="0" width="8" height="13" fill="#f0dcb0" rx="3.5" stroke="#b89060" stroke-width="1"/><rect x="143.5" y="6" width="3" height="5" fill="#c8a070" rx="1"/><rect x="141" y="19" width="8" height="12" fill="#f0dcb0" rx="3.5" stroke="#b89060" stroke-width="1"/><rect x="143.5" y="25" width="3" height="5" fill="#c8a070" rx="1"/><rect x="163" y="0" width="8" height="13" fill="#f0dcb0" rx="3.5" stroke="#b89060" stroke-width="1"/><rect x="165.5" y="6" width="3" height="5" fill="#c8a070" rx="1"/><rect x="163" y="19" width="8" height="12" fill="#f0dcb0" rx="3.5" stroke="#b89060" stroke-width="1"/><rect x="165.5" y="25" width="3" height="5" fill="#c8a070" rx="1"/><rect x="192" y="0" width="8" height="13" fill="#f0dcb0" rx="3.5" stroke="#b89060" stroke-width="1"/><rect x="194.5" y="6" width="3" height="5" fill="#c8a070" rx="1"/><rect x="192" y="19" width="8" height="12" fill="#f0dcb0" rx="3.5" stroke="#b89060" stroke-width="1"/><rect x="194.5" y="25" width="3" height="5" fill="#c8a070" rx="1"/><rect x="221" y="0" width="8" height="13" fill="#f0dcb0" rx="3.5" stroke="#b89060" stroke-width="1"/><rect x="223.5" y="6" width="3" height="5" fill="#c8a070" rx="1"/><rect x="221" y="19" width="8" height="12" fill="#f0dcb0" rx="3.5" stroke="#b89060" stroke-width="1"/><rect x="223.5" y="25" width="3" height="5" fill="#c8a070" rx="1"/><rect x="243" y="0" width="8" height="13" fill="#f0dcb0" rx="3.5" stroke="#b89060" stroke-width="1"/><rect x="245.5" y="6" width="3" height="5" fill="#c8a070" rx="1"/><rect x="243" y="19" width="8" height="12" fill="#f0dcb0" rx="3.5" stroke="#b89060" stroke-width="1"/><rect x="245.5" y="25" width="3" height="5" fill="#c8a070" rx="1"/><rect x="272" y="0" width="8" height="13" fill="#f0dcb0" rx="3.5" stroke="#b89060" stroke-width="1"/><rect x="274.5" y="6" width="3" height="5" fill="#c8a070" rx="1"/><rect x="272" y="19" width="8" height="12" fill="#f0dcb0" rx="3.5" stroke="#b89060" stroke-width="1"/><rect x="274.5" y="25" width="3" height="5" fill="#c8a070" rx="1"/><rect x="301" y="0" width="8" height="13" fill="#f0dcb0" rx="3.5" stroke="#b89060" stroke-width="1"/><rect x="303.5" y="6" width="3" height="5" fill="#c8a070" rx="1"/><rect x="301" y="19" width="8" height="12" fill="#f0dcb0" rx="3.5" stroke="#b89060" stroke-width="1"/><rect x="303.5" y="25" width="3" height="5" fill="#c8a070" rx="1"/><rect x="323" y="0" width="8" height="13" fill="#f0dcb0" rx="3.5" stroke="#b89060" stroke-width="1"/><rect x="325.5" y="6" width="3" height="5" fill="#c8a070" rx="1"/><rect x="323" y="19" width="8" height="12" fill="#f0dcb0" rx="3.5" stroke="#b89060" stroke-width="1"/><rect x="325.5" y="25" width="3" height="5" fill="#c8a070" rx="1"/><rect x="352" y="0" width="8" height="13" fill="#f0dcb0" rx="3.5" stroke="#b89060" stroke-width="1"/><rect x="354.5" y="6" width="3" height="5" fill="#c8a070" rx="1"/><rect x="352" y="19" width="8" height="12" fill="#f0dcb0" rx="3.5" stroke="#b89060" stroke-width="1"/><rect x="354.5" y="25" width="3" height="5" fill="#c8a070" rx="1"/><rect x="381" y="0" width="8" height="13" fill="#f0dcb0" rx="3.5" stroke="#b89060" stroke-width="1"/><rect x="383.5" y="6" width="3" height="5" fill="#c8a070" rx="1"/><rect x="381" y="19" width="8" height="12" fill="#f0dcb0" rx="3.5" stroke="#b89060" stroke-width="1"/><rect x="383.5" y="25" width="3" height="5" fill="#c8a070" rx="1"/><rect x="403" y="0" width="8" height="13" fill="#f0dcb0" rx="3.5" stroke="#b89060" stroke-width="1"/><rect x="405.5" y="6" width="3" height="5" fill="#c8a070" rx="1"/><rect x="403" y="19" width="8" height="12" fill="#f0dcb0" rx="3.5" stroke="#b89060" stroke-width="1"/><rect x="405.5" y="25" width="3" height="5" fill="#c8a070" rx="1"/><rect x="432" y="0" width="8" height="13" fill="#f0dcb0" rx="3.5" stroke="#b89060" stroke-width="1"/><rect x="434.5" y="6" width="3" height="5" fill="#c8a070" rx="1"/><rect x="432" y="19" width="8" height="12" fill="#f0dcb0" rx="3.5" stroke="#b89060" stroke-width="1"/><rect x="434.5" y="25" width="3" height="5" fill="#c8a070" rx="1"/><rect x="461" y="0" width="8" height="13" fill="#f0dcb0" rx="3.5" stroke="#b89060" stroke-width="1"/><rect x="463.5" y="6" width="3" height="5" fill="#c8a070" rx="1"/><rect x="461" y="19" width="8" height="12" fill="#f0dcb0" rx="3.5" stroke="#b89060" stroke-width="1"/><rect x="463.5" y="25" width="3" height="5" fill="#c8a070" rx="1"/><rect x="483" y="0" width="8" height="13" fill="#f0dcb0" rx="3.5" stroke="#b89060" stroke-width="1"/><rect x="485.5" y="6" width="3" height="5" fill="#c8a070" rx="1"/><rect x="483" y="19" width="8" height="12" fill="#f0dcb0" rx="3.5" stroke="#b89060" stroke-width="1"/><rect x="485.5" y="25" width="3" height="5" fill="#c8a070" rx="1"/></svg></g><g transform="translate(145.5,581.5) scale(.7)"><g transform="translate(0,0)"><path d="M16 64 C28 82 60 80 80 60 C88 52 93 44 94 34" fill="none" stroke="#58a8f0" stroke-width="1.4"/><path d="M20 72 C36 82 58 80 72 68 M84 62 C90 54 94 46 95 40" fill="none" stroke="#78b8f8" stroke-width="1.1"/><polygon points="0,47.5 5.7,46.5 7.9,41 21,34 32,36.5 43.4,34 47.9,24 63.4,17.5 74.5,12 89,18.7 90,37.5 79,55 61,70 41,74 23.4,66 19,53 0,51.5" fill="#a87848" stroke="#181008" stroke-width="2" stroke-linejoin="round"/><polygon points="2,48 8,43 21,36.5 32,39 43,37 47,44 36,50 20,50" fill="#d8b078" /><polygon points="0,48 18,48 18,51.5 0,51.5" fill="#6c4828" /><polygon points="50,26 63.4,19.5 74.5,14.5 87,20 87,30 70,42 52,46" fill="#c89860" /><polygon points="64,17 75,13.5 87,19 80,24 68,22" fill="#e4bc84" /><polygon points="22,55 40,58 62,52 80,40 78,52 61,66 41,70 25,63" fill="#8c6038" /><path d="M52 40 L58 30 M60 44 L66 32 M68 42 L74 28 M76 36 L82 24 M26 60 L62 58 L82 44" fill="none" stroke="#5c3c1c" stroke-width="1.2"/><ellipse cx="40" cy="63" rx="2" ry="2" fill="#f0e8e0" /><rect x="45.3" y="8" width="3" height="38" fill="#c09060" stroke="#402810" stroke-width=".9"/><ellipse cx="46.8" cy="4.5" rx="4.6" ry="4.6" fill="#d8b078" stroke="#402810" stroke-width="1.2"/><polygon points="25.5,5.5 28.5,3.2 67,30 64.5,33.5" fill="#f8f8f8" stroke="#202020" stroke-width="1"/></g></g></svg>
</div>
<div class="a" style="left:540px;top:473px;width:18px;height:141px;background:#f2f2f2;border:1px solid #dadada;border-radius:3px"></div>
</div>
</div>
<div class="frame"></div>
</div>
<div class="win" style="left:222px;top:148px;width:902px;height:802px">
<div class="a" style="left:7px;top:7px;width:888px;height:788px;overflow:hidden;background:#e8e8e8">
<div class="a" style="left:0;top:0;width:888px;height:21px;background:linear-gradient(#f2eaf8 0%,#e0cdf4 25%,#c39af2 60%,#a868e8 100%);line-height:19px;padding-left:4px">Background editor</div>
<div class="btn" style="left:0px;top:21px;width:70px;height:29px;line-height:27px;">Save</div>
<div class="btn" style="left:70px;top:21px;width:70px;height:29px;line-height:27px;color:#c02020">Discard</div>
<div class="btn" style="left:140px;top:21px;width:80px;height:29px;line-height:27px;">Category</div>
<div class="btn" style="left:220px;top:21px;width:60px;height:29px;line-height:27px;">Undo</div>
<div class="btn" style="left:280px;top:21px;width:60px;height:29px;line-height:27px;">Redo</div>
<div class="btn" style="left:848px;top:21px;width:40px;height:29px;line-height:27px;"></div>
<svg class="a" style="left:863px;top:30px" width="10" height="9"><polygon points="0,9 5.0,0 10,9" fill="#000"/></svg>
<div class="t" style="left:12px;top:57px;letter-spacing:-.4px;font-size:11.5px">Name</div>
<div class="inp" style="left:44px;top:56px;width:639px;height:18px;line-height:15px;line-height:17px;font-size:11.5px">STAGE2 SEA</div>
<div class="t" style="left:701px;top:57px;font-size:11.5px">GUID</div>
<div class="inp" style="left:731px;top:56px;width:153px;height:18px;line-height:15px;line-height:17px">32</div>
<div class="a" style="left:0px;top:80px;width:888px;height:1px;background:#f4f4f4;"></div>
<div class="a" style="left:0;top:81px;width:545px;height:707px;overflow:hidden">
<div class="t" style="left:45px;top:2px;">Image file</div>
<div class="a" style="left:101px;top:0px;width:20px;height:20px;background:#ececec;border:1px solid #dcdcdc"></div>
<svg class="a" style="left:106px;top:5px" width="10" height="9"><polygon points="0,9 5.0,0 10,9" fill="#000"/></svg>
<div class="inp" style="left:121px;top:0px;width:404px;height:20px;line-height:17px;line-height:16px">..\resources\img_bg01.bmp</div>
<div class="a" style="left:525px;top:0px;width:20px;height:20px;background:#ececec;border:1px solid #dcdcdc"></div>
<div class="t" style="left:530px;top:-1px;font-size:10px;font-weight:bold">...</div>
<div class="t" style="left:9px;top:27px;letter-spacing:-.25px">Color key(ARGB)</div>
<div class="inp" style="left:101px;top:25px;width:130px;height:20px;line-height:17px;">0xFF000000</div>
<div class="a" style="left:232px;top:25px;width:19px;height:20px;background:#ececec;border:1px solid #dcdcdc"></div>
<div class="t" style="left:236px;top:24px;font-size:10px;font-weight:bold">...</div>
<div class="inp" style="left:269px;top:25px;width:80px;height:20px;line-height:17px;line-height:18px">100%</div>
<svg class="a" style="left:331px;top:31px" width="11" height="9"><polygon points="0,0 11,0 5.5,9" fill="#000"/></svg>
<div class="a" style="left:0px;top:49px;width:545px;height:31px;background:#f8f8f8;"></div>
<div class="tab on" style="left:2px;top:55px;width:44px">Bank0</div>
<div class="tab" style="left:47px;top:55px;width:34px">1</div>
<div class="tab" style="left:82px;top:55px;width:34px">2</div>
<div class="tab" style="left:117px;top:55px;width:34px">3</div>
<div class="tab" style="left:152px;top:55px;width:34px">4</div>
<div class="tab" style="left:187px;top:55px;width:34px">5</div>
<div class="tab" style="left:222px;top:55px;width:34px">6</div>
<div class="tab" style="left:257px;top:55px;width:34px">7</div>
<div class="tab" style="left:292px;top:55px;width:39px">Hit</div>
<div class="a" style="left:0px;top:80px;width:545px;height:435px;background:#808080;"></div>
<div class="a" style="left:34px;top:80px;width:1px;height:435px;background:#101010;"></div>
<div class="a" style="left:35px;top:80px;width:1px;height:435px;background:#989898;"></div>
<div class="a" style="left:0;top:80px;width:545px;height:435px;overflow:hidden">
<div class="a" style="left:35px;top:-62px"><svg width="512" height="512" viewBox="0 0 512 512" style="display:block"><rect x="11" y="46" width="58" height="30" fill="#187850" rx="5"/><rect x="10" y="49" width="60" height="23" fill="#187850" rx="3"/><ellipse cx="26.0" cy="49.5" rx="2.6" ry="2.3" fill="#107048" /><ellipse cx="46.8" cy="48.2" rx="2.6" ry="2.3" fill="#30a868" /><ellipse cx="44.4" cy="61.0" rx="2.6" ry="2.3" fill="#30a868" /><ellipse cx="31.2" cy="49.8" rx="2.6" ry="2.3" fill="#28985c" /><ellipse cx="61.3" cy="59.0" rx="2.6" ry="2.3" fill="#28985c" /><ellipse cx="45.3" cy="71.0" rx="2.6" ry="2.3" fill="#30a868" /><ellipse cx="60.8" cy="60.7" rx="2.6" ry="2.3" fill="#0c6444" /><ellipse cx="46.6" cy="53.0" rx="2.6" ry="2.3" fill="#107048" /><ellipse cx="59.7" cy="55.7" rx="2.6" ry="2.3" fill="#30a868" /><ellipse cx="63.5" cy="64.8" rx="2.6" ry="2.3" fill="#28985c" /><ellipse cx="65.4" cy="69.6" rx="2.6" ry="2.3" fill="#30a868" /><ellipse cx="31.6" cy="66.7" rx="2.6" ry="2.3" fill="#107048" /><ellipse cx="38.9" cy="49.1" rx="2.6" ry="2.3" fill="#107048" /><ellipse cx="18.4" cy="68.9" rx="2.6" ry="2.3" fill="#28985c" /><ellipse cx="24.3" cy="49.1" rx="2.6" ry="2.3" fill="#30a868" /><ellipse cx="17.7" cy="53.1" rx="2.6" ry="2.3" fill="#0c6444" /><ellipse cx="17.6" cy="61.7" rx="2.6" ry="2.3" fill="#0c6444" /><ellipse cx="32.0" cy="49.8" rx="2.6" ry="2.3" fill="#0c6444" /><ellipse cx="43.8" cy="66.8" rx="2.6" ry="2.3" fill="#28985c" /><ellipse cx="27.1" cy="70.5" rx="2.6" ry="2.3" fill="#28985c" /><ellipse cx="46.6" cy="48.0" rx="2.6" ry="2.3" fill="#30a868" /><ellipse cx="32.2" cy="72.5" rx="2.6" ry="2.3" fill="#28985c" /><ellipse cx="38.4" cy="53.9" rx="2.6" ry="2.3" fill="#30a868" /><ellipse cx="40.5" cy="58.6" rx="2.6" ry="2.3" fill="#30a868" /><ellipse cx="31.3" cy="50.0" rx="2.6" ry="2.3" fill="#107048" /><ellipse cx="40.4" cy="57.4" rx="2.6" ry="2.3" fill="#28985c" /><ellipse cx="58.5" cy="63.9" rx="2.6" ry="2.3" fill="#28985c" /><ellipse cx="66.9" cy="58.7" rx="2.6" ry="2.3" fill="#0c6444" /><ellipse cx="42.0" cy="52.6" rx="2.6" ry="2.3" fill="#107048" /><ellipse cx="22.7" cy="66.8" rx="2.6" ry="2.3" fill="#0c6444" /><ellipse cx="19.0" cy="68.8" rx="2.6" ry="2.3" fill="#28985c" /><ellipse cx="57.3" cy="58.4" rx="2.6" ry="2.3" fill="#0c6444" /><ellipse cx="51.7" cy="57.8" rx="2.6" ry="2.3" fill="#28985c" /><ellipse cx="30.6" cy="56.1" rx="2.6" ry="2.3" fill="#28985c" /><ellipse cx="15.3" cy="51.6" rx="2.6" ry="2.3" fill="#0c6444" /><ellipse cx="40.9" cy="51.9" rx="2.6" ry="2.3" fill="#107048" /><ellipse cx="15.6" cy="47.0" rx="2.6" ry="2.3" fill="#0c6444" /><ellipse cx="47.6" cy="58.7" rx="2.6" ry="2.3" fill="#30a868" /><ellipse cx="16.5" cy="50.6" rx="2.6" ry="2.3" fill="#107048" /><ellipse cx="46.9" cy="60.0" rx="2.6" ry="2.3" fill="#0c6444" /><ellipse cx="20.1" cy="58.8" rx="2.6" ry="2.3" fill="#28985c" /><ellipse cx="29.0" cy="54.7" rx="2.6" ry="2.3" fill="#0c6444" /><ellipse cx="60.9" cy="66.6" rx="2.6" ry="2.3" fill="#28985c" /><ellipse cx="31.0" cy="64.1" rx="2.6" ry="2.3" fill="#0c6444" /><ellipse cx="48.0" cy="52.2" rx="2.6" ry="2.3" fill="#28985c" /><ellipse cx="60.5" cy="70.3" rx="2.6" ry="2.3" fill="#107048" /><ellipse cx="30.4" cy="60.1" rx="2.6" ry="2.3" fill="#30a868" /><ellipse cx="49.5" cy="62.1" rx="2.6" ry="2.3" fill="#28985c" /><ellipse cx="26.0" cy="67.5" rx="2.6" ry="2.3" fill="#0c6444" /><ellipse cx="48.0" cy="56.8" rx="2.6" ry="2.3" fill="#107048" /><ellipse cx="37.4" cy="56.7" rx="2.6" ry="2.3" fill="#28985c" /><ellipse cx="64.3" cy="69.4" rx="2.6" ry="2.3" fill="#30a868" /><rect x="122" y="30" width="61" height="44" fill="#a86420" rx="4"/><rect x="125" y="30" width="55" height="36" fill="#44a830" rx="3"/><rect x="125" y="62" width="55" height="4" fill="#78c840" /><ellipse cx="265" cy="58" rx="35" ry="22" fill="#ecc8a0" /><ellipse cx="250" cy="70" rx="14" ry="8" fill="#e0b890" /><ellipse cx="285" cy="70" rx="12" ry="7" fill="#e0b890" /><g id="trio"><g transform="translate(0,0)"><ellipse cx="357" cy="83.5" rx="13" ry="8.2" fill="#50646a" /><ellipse cx="409" cy="83.5" rx="13" ry="8.2" fill="#50646a" /><ellipse cx="383" cy="99.7" rx="15" ry="8" fill="#50646a" /><polygon points="354,86 356,70 363,70 366,86" fill="#d07820" /><polygon points="403,86 405,70 412,70 414,86" fill="#d07820" /><polygon points="377,102 379,86 387,86 390,102" fill="#d07820" /><rect x="354" y="82" width="12" height="4" fill="#a85810" /><rect x="403" y="82" width="11" height="4" fill="#a85810" /><rect x="377" y="98" width="13" height="4" fill="#a85810" /><ellipse cx="354" cy="50" rx="18" ry="26" fill="#48a418" /><ellipse cx="414" cy="50" rx="18" ry="26" fill="#48a418" /><ellipse cx="383" cy="56" rx="21.5" ry="32" fill="#5cbc10" stroke="#1c6048" stroke-width="1"/><ellipse cx="384" cy="50" rx="12" ry="14" fill="#70d020" /><ellipse cx="376" cy="76" rx="6" ry="5" fill="#4ca414" /></g></g><rect x="9" y="90" width="64" height="63" fill="#c09860" rx="7"/><rect x="11" y="92" width="60" height="59" fill="#ecd0a0" rx="6"/><rect x="13" y="94" width="18" height="14" fill="#f0d4a8" rx="5" stroke="#c8a070" stroke-width="1.2"/><rect x="33" y="93" width="16" height="12" fill="#f0d4a8" rx="5" stroke="#c8a070" stroke-width="1.2"/><rect x="51" y="94" width="18" height="15" fill="#f0d4a8" rx="5" stroke="#c8a070" stroke-width="1.2"/><rect x="12" y="110" width="14" height="16" fill="#f0d4a8" rx="5" stroke="#c8a070" stroke-width="1.2"/><rect x="28" y="107" width="20" height="18" fill="#f0d4a8" rx="5" stroke="#c8a070" stroke-width="1.2"/><rect x="50" y="111" width="19" height="14" fill="#f0d4a8" rx="5" stroke="#c8a070" stroke-width="1.2"/><rect x="14" y="128" width="19" height="20" fill="#f0d4a8" rx="5" stroke="#c8a070" stroke-width="1.2"/><rect x="35" y="127" width="16" height="12" fill="#f0d4a8" rx="5" stroke="#c8a070" stroke-width="1.2"/><rect x="53" y="127" width="16" height="20" fill="#f0d4a8" rx="5" stroke="#c8a070" stroke-width="1.2"/><rect x="34" y="141" width="17" height="9" fill="#f0d4a8" rx="5" stroke="#c8a070" stroke-width="1.2"/><rect x="80" y="106" width="32" height="14" fill="#e8c898" /><rect x="90" y="96" width="12" height="32" fill="#e8c898" /><rect x="80" y="114" width="10" height="6" fill="#c8a070" /><rect x="102" y="114" width="10" height="6" fill="#c8a070" /><rect x="90" y="123" width="12" height="5" fill="#c8a070" /><rect x="120" y="91" width="64" height="65" fill="#60b0e8" rx="8"/><rect x="122" y="93" width="60" height="62" fill="#a06020" rx="6"/><rect x="124" y="93" width="56" height="52" fill="#3ea42c" rx="4"/><rect x="126" y="95" width="52" height="48" fill="#48b034" rx="3"/><rect x="124" y="143" width="56" height="3" fill="#70c840" /><polygon points="201,96 213,96 213,106 223,106 223,120 213,120 213,128 201,128 201,120 191,120 191,106 201,106" fill="none" stroke="#60b0e8" stroke-width="1.5"/><rect x="191" y="106" width="32" height="14" fill="#48a830" /><rect x="201" y="96" width="12" height="32" fill="#48a830" /><rect x="191" y="114" width="10" height="6" fill="#a06020" /><rect x="213" y="114" width="10" height="6" fill="#a06020" /><rect x="201" y="123" width="12" height="5" fill="#a06020" /><rect x="204" y="96" width="6" height="32" fill="#70c840" /><rect x="191" y="109" width="32" height="5" fill="#70c840" /><polygon points="239.0,89.5 243.2,90.1 247.5,90.3 251.8,90.9 256.0,90.1 260.2,90.9 264.5,86.9 268.8,88.8 273.0,91.0 277.2,89.7 281.5,90.8 285.8,87.3 290.0,88.9 294.9,95.0 296.2,99.2 296.3,103.3 293.9,107.5 294.8,111.7 295.0,115.8 297.8,120.0 297.2,124.2 294.5,128.3 297.3,132.5 294.4,136.7 296.5,140.8 294.4,145.0 290.0,148.8 285.8,152.6 281.5,149.7 277.2,149.7 273.0,153.1 268.8,152.6 264.5,150.1 260.2,153.0 256.0,151.2 251.8,151.8 247.5,149.7 243.2,152.9 239.0,151.8 235.1,145.0 234.7,140.8 232.1,136.7 232.4,132.5 231.5,128.3 231.4,124.2 231.1,120.0 232.1,115.8 233.5,111.7 230.8,107.5 233.8,103.3 232.3,99.2 232.2,95.0" fill="#b4a438" /><rect x="236" y="92" width="57" height="56" fill="#e2ca68" rx="6"/><polygon points="250,110 258,100 262,104 254,114" fill="#f0dc80" /><polygon points="268,124 278,112 282,116 272,128" fill="#f0dc80" /><polygon points="246,134 254,126 258,130 250,138" fill="#f0dc80" /><rect x="304" y="106" width="32" height="12" fill="#e0c860" /><rect x="314" y="96" width="12" height="32" fill="#e0c860" /><rect x="304" y="115" width="32" height="3" fill="#b8a438" /><rect x="314" y="124" width="12" height="4" fill="#b8a438" /><ellipse cx="360" cy="148" rx="20" ry="6" fill="#48a030" /><path d="M343 148 C343 130 352 120 364 121 C374 122 379 134 378 146 L366 152 L350 152 Z" fill="#e4c488" stroke="#b08850" stroke-width="1.2"/><polygon points="366,152 378,146 376,132 362,138" fill="#c8a468" /><rect x="8" y="172" width="64" height="64" fill="#60b0e8" rx="8"/><rect x="10" y="174" width="60" height="61" fill="#a06020" rx="6"/><rect x="11" y="174" width="58" height="50" fill="#d4c0a8" rx="5"/><rect x="14" y="177" width="52" height="44" fill="#e8dcd0" rx="4"/><polygon points="20,200 40,186 60,184 40,196" fill="#f4ece4" /><polygon points="18,214 44,202 62,204 40,212" fill="#d8c8b8" /><polygon points="90,176 102,176 102,186 112,186 112,200 102,200 102,208 90,208 90,200 80,200 80,186 90,186" fill="none" stroke="#60b0e8" stroke-width="1.5"/><rect x="80" y="186" width="32" height="14" fill="#e8dcd0" /><rect x="90" y="176" width="12" height="32" fill="#e8dcd0" /><rect x="80" y="194" width="10" height="6" fill="#a06020" /><rect x="102" y="194" width="10" height="6" fill="#a06020" /><rect x="90" y="203" width="12" height="5" fill="#a06020" /><polygon points="120.0,161.7 125.3,163.2 130.7,162.4 136.0,163.5 141.3,163.6 146.7,160.9 152.0,160.7 157.3,164.6 162.7,161.8 168.0,161.7 173.3,165.4 178.7,162.9 184.0,164.6 189.9,169.0 190.7,174.2 188.3,179.5 190.6,184.8 191.8,190.0 190.1,195.2 191.2,200.5 190.8,205.8 187.9,211.0 191.2,216.2 190.4,221.5 189.0,226.8 187.7,232.0 184.0,239.8 178.7,237.9 173.3,239.1 168.0,239.8 162.7,239.0 157.3,240.0 152.0,237.5 146.7,239.4 141.3,237.7 136.0,240.1 130.7,239.8 125.3,236.1 120.0,236.3 112.6,232.0 116.2,226.8 113.7,221.5 114.6,216.2 113.0,211.0 114.0,205.8 113.5,200.5 113.3,195.2 114.4,190.0 114.4,184.8 115.9,179.5 114.9,174.2 116.1,169.0" fill="#3e9434" /><polygon points="122.0,163.9 127.0,163.4 132.0,164.6 137.0,163.6 142.0,163.3 147.0,164.6 152.0,166.7 157.0,166.2 162.0,166.1 167.0,163.9 172.0,165.1 177.0,164.1 182.0,163.7 186.4,171.0 186.9,176.4 189.7,181.7 189.3,187.1 189.2,192.5 189.2,197.8 186.8,203.2 187.2,208.5 188.5,213.9 188.9,219.3 189.4,224.6 189.5,230.0 182.0,234.3 177.0,236.4 172.0,236.7 167.0,236.0 162.0,234.7 157.0,235.9 152.0,234.4 147.0,237.7 142.0,237.5 137.0,236.2 132.0,235.2 127.0,237.6 122.0,236.3 117.5,230.0 117.4,224.6 116.0,219.3 115.7,213.9 116.4,208.5 115.7,203.2 114.6,197.8 115.2,192.5 117.3,187.1 114.2,181.7 114.2,176.4 116.5,171.0" fill="#48a43c" /><clipPath id="c114_163"><rect x="117" y="166" width="70" height="69" rx="5"/></clipPath><g clip-path="url(#c114_163)" stroke="#58b44a" stroke-width="1.6"><path d="M39 238 L114 163"/><path d="M46 238 L121 163"/><path d="M53 238 L128 163"/><path d="M60 238 L135 163"/><path d="M67 238 L142 163"/><path d="M74 238 L149 163"/><path d="M81 238 L156 163"/><path d="M88 238 L163 163"/><path d="M95 238 L170 163"/><path d="M102 238 L177 163"/><path d="M109 238 L184 163"/><path d="M116 238 L191 163"/><path d="M123 238 L198 163"/><path d="M130 238 L205 163"/><path d="M137 238 L212 163"/><path d="M144 238 L219 163"/><path d="M151 238 L226 163"/><path d="M158 238 L233 163"/><path d="M165 238 L240 163"/><path d="M172 238 L247 163"/><path d="M179 238 L254 163"/><path d="M186 238 L261 163"/></g><polygon points="197.0,175.8 202.2,175.4 207.5,174.3 212.8,177.8 218.0,173.6 224.0,182.0 225.9,187.0 222.0,192.0 224.3,197.0 224.6,202.0 218.0,205.8 212.8,207.4 207.5,209.0 202.2,207.8 197.0,209.1 189.4,202.0 189.7,197.0 189.1,192.0 191.0,187.0 193.0,182.0" fill="#3e9434" /><polygon points="199.0,178.3 204.7,177.7 210.3,178.3 216.0,176.8 223.3,184.0 223.3,189.3 222.6,194.7 220.6,200.0 216.0,206.1 210.3,205.3 204.7,205.0 199.0,207.8 195.0,200.0 191.2,194.7 194.4,189.3 193.4,184.0" fill="#48a43c" /><clipPath id="c191_176"><rect x="194" y="179" width="27" height="26" rx="5"/></clipPath><g clip-path="url(#c191_176)" stroke="#58b44a" stroke-width="1.6"><path d="M159 208 L191 176"/><path d="M166 208 L198 176"/><path d="M173 208 L205 176"/><path d="M180 208 L212 176"/><path d="M187 208 L219 176"/><path d="M194 208 L226 176"/><path d="M201 208 L233 176"/><path d="M208 208 L240 176"/><path d="M215 208 L247 176"/><path d="M222 208 L254 176"/></g><rect x="224" y="160" width="48" height="32" fill="#6cc818" /><ellipse cx="232" cy="168" rx="6" ry="5" fill="#84dc3c" /><ellipse cx="256" cy="178" rx="9" ry="7" fill="#84dc3c" /><ellipse cx="262" cy="164" rx="4" ry="3" fill="#84dc3c" /><path d="M242 160 L244 168 L240 178 L238 186 L232 184 L224 186 M244 168 L250 166 L258 166 L264 160 M258 166 L266 176 L270 186 L268 192 M238 186 L240 192" fill="none" stroke="#1c6048" stroke-width="1.4"/><rect x="224" y="192" width="16" height="18" fill="#5cb418" /><rect x="228" y="194" width="2" height="12" fill="#1c6048" /><rect x="235" y="194" width="2" height="12" fill="#1c6048" /><rect x="224" y="212" width="16" height="8" fill="#566a70" /><polygon points="225,214 229,200 235,200 239,214" fill="#c06820" /><polygon points="241,215 243,205 246,202 252,202 255,205 257,215" fill="#c06820" /><rect x="245" y="203" width="6" height="4" fill="#e89050" /><ellipse cx="295.5" cy="217.5" rx="17" ry="6.5" fill="#186060" /><rect x="291" y="210" width="9" height="8" fill="#c06820" /><polygon points="290,164 300,164 309.4,174 310,182.4 317.7,190.5 317.7,201.4 308.6,210.2 298.4,212.4 290.4,212.4 281.6,208 274.3,200.7 274.3,186.8 282,179.5 282.7,172.2" fill="#68c418" stroke="#1c6048" stroke-width="1.4" stroke-linejoin="round"/><polygon points="275,200 284,204 296,201 308,204 317,200 317,201.4 308.6,209.6 298.4,211.6 290.4,211.6 281.6,207.4 275,200.7" fill="#5a9c18" /><ellipse cx="296" cy="180" rx="9" ry="8" fill="#84dc3c" /><ellipse cx="286" cy="193" rx="5" ry="4" fill="#7cd430" /><ellipse cx="304" cy="194" rx="6" ry="4" fill="#7cd430" /><polygon points="335.5,202 346,223 322,223" fill="#74cc24" stroke="#1c6048" stroke-width="1.3" stroke-linejoin="round"/><polygon points="335,172 349,193 349,197 336,206 322,197 322,193" fill="#68c418" stroke="#1c6048" stroke-width="1.3" stroke-linejoin="round"/><polygon points="323,196 336,199 348,196 336,205" fill="#5a9c18" /><ellipse cx="335" cy="186" rx="4" ry="5" fill="#84dc3c" /><g id="fen"><ellipse cx="433.0" cy="217" rx="8.5" ry="2.5" fill="#587070" /><rect x="426.5" y="183" width="11" height="34" fill="#c87830" rx="2"/><rect x="426.5" y="183" width="2.5" height="34" fill="#a05a1c" rx="1"/><rect x="425" y="180" width="14" height="7" fill="#d08838" rx="2.5"/><rect x="427" y="181" width="9" height="2" fill="#e8a858" rx="1"/><ellipse cx="433.0" cy="245" rx="8.5" ry="2.5" fill="#587070" /><rect x="426.5" y="219" width="11" height="26" fill="#c87830" rx="2"/><rect x="426.5" y="219" width="2.5" height="26" fill="#a05a1c" rx="1"/><rect x="425" y="216" width="14" height="7" fill="#d08838" rx="2.5"/><rect x="427" y="217" width="9" height="2" fill="#e8a858" rx="1"/><ellipse cx="433.0" cy="271" rx="8.5" ry="2.5" fill="#587070" /><rect x="426.5" y="247" width="11" height="24" fill="#c87830" rx="2"/><rect x="426.5" y="247" width="2.5" height="24" fill="#a05a1c" rx="1"/><rect x="425" y="244" width="14" height="7" fill="#d08838" rx="2.5"/><rect x="427" y="245" width="9" height="2" fill="#e8a858" rx="1"/><rect x="352" y="229" width="12" height="2" fill="#587070" /><rect x="352" y="220" width="12" height="7" fill="#c87830" /><rect x="352" y="220" width="12" height="2" fill="#e09848" /><rect x="352" y="225.5" width="12" height="1.5" fill="#a05a1c" /><ellipse cx="371.0" cy="235" rx="7.5" ry="2.5" fill="#587070" /><rect x="365.5" y="211" width="9" height="24" fill="#c87830" rx="2"/><rect x="365.5" y="211" width="2.5" height="24" fill="#a05a1c" rx="1"/><rect x="364" y="208" width="12" height="7" fill="#d08838" rx="2.5"/><rect x="366" y="209" width="7" height="2" fill="#e8a858" rx="1"/><rect x="406" y="229" width="10" height="2" fill="#587070" /><rect x="406" y="220" width="10" height="7" fill="#c87830" /><rect x="406" y="220" width="10" height="2" fill="#e09848" /><rect x="406" y="225.5" width="10" height="1.5" fill="#a05a1c" /><ellipse cx="402.0" cy="235" rx="7.5" ry="2.5" fill="#587070" /><rect x="396.5" y="214" width="9" height="21" fill="#c87830" rx="2"/><rect x="396.5" y="214" width="2.5" height="21" fill="#a05a1c" rx="1"/><rect x="395" y="211" width="12" height="7" fill="#d08838" rx="2.5"/><rect x="397" y="212" width="7" height="2" fill="#e8a858" rx="1"/><rect x="352" y="260" width="12" height="2" fill="#587070" /><rect x="352" y="251" width="12" height="7" fill="#c87830" /><rect x="352" y="251" width="12" height="2" fill="#e09848" /><rect x="352" y="256.5" width="12" height="1.5" fill="#a05a1c" /><ellipse cx="371.0" cy="270" rx="7.5" ry="2.5" fill="#587070" /><rect x="365.5" y="247" width="9" height="23" fill="#c87830" rx="2"/><rect x="365.5" y="247" width="2.5" height="23" fill="#a05a1c" rx="1"/><rect x="364" y="244" width="12" height="7" fill="#d08838" rx="2.5"/><rect x="366" y="245" width="7" height="2" fill="#e8a858" rx="1"/><rect x="406" y="260" width="10" height="2" fill="#587070" /><rect x="406" y="251" width="10" height="7" fill="#c87830" /><rect x="406" y="251" width="10" height="2" fill="#e09848" /><rect x="406" y="256.5" width="10" height="1.5" fill="#a05a1c" /><ellipse cx="401.0" cy="270" rx="7.5" ry="2.5" fill="#587070" /><rect x="395.5" y="247" width="9" height="23" fill="#c87830" rx="2"/><rect x="395.5" y="247" width="2.5" height="23" fill="#a05a1c" rx="1"/><rect x="394" y="244" width="12" height="7" fill="#d08838" rx="2.5"/><rect x="396" y="245" width="7" height="2" fill="#e8a858" rx="1"/><rect x="374" y="293" width="54" height="2" fill="#587070" /><rect x="374" y="284" width="54" height="7" fill="#c87830" /><rect x="374" y="284" width="54" height="2" fill="#e09848" /><rect x="374" y="289.5" width="54" height="1.5" fill="#a05a1c" /><ellipse cx="370.5" cy="299" rx="8.0" ry="2.5" fill="#587070" /><rect x="364.5" y="280" width="10" height="19" fill="#c87830" rx="2"/><rect x="364.5" y="280" width="2.5" height="19" fill="#a05a1c" rx="1"/><rect x="363" y="277" width="13" height="7" fill="#d08838" rx="2.5"/><rect x="365" y="278" width="8" height="2" fill="#e8a858" rx="1"/><ellipse cx="400.5" cy="299" rx="8.0" ry="2.5" fill="#587070" /><rect x="394.5" y="280" width="10" height="19" fill="#c87830" rx="2"/><rect x="394.5" y="280" width="2.5" height="19" fill="#a05a1c" rx="1"/><rect x="393" y="277" width="13" height="7" fill="#d08838" rx="2.5"/><rect x="395" y="278" width="8" height="2" fill="#e8a858" rx="1"/><ellipse cx="434.0" cy="299" rx="8.5" ry="2.5" fill="#587070" /><rect x="427.5" y="280" width="11" height="19" fill="#c87830" rx="2"/><rect x="427.5" y="280" width="2.5" height="19" fill="#a05a1c" rx="1"/><rect x="426" y="277" width="14" height="7" fill="#d08838" rx="2.5"/><rect x="428" y="278" width="9" height="2" fill="#e8a858" rx="1"/><ellipse cx="370.5" cy="332" rx="8.0" ry="2.5" fill="#587070" /><rect x="364.5" y="311" width="10" height="21" fill="#c87830" rx="2"/><rect x="364.5" y="311" width="2.5" height="21" fill="#a05a1c" rx="1"/><rect x="363" y="308" width="13" height="7" fill="#d08838" rx="2.5"/><rect x="365" y="309" width="8" height="2" fill="#e8a858" rx="1"/><ellipse cx="400.5" cy="332" rx="8.0" ry="2.5" fill="#587070" /><rect x="394.5" y="311" width="10" height="21" fill="#c87830" rx="2"/><rect x="394.5" y="311" width="2.5" height="21" fill="#a05a1c" rx="1"/><rect x="393" y="308" width="13" height="7" fill="#d08838" rx="2.5"/><rect x="395" y="309" width="8" height="2" fill="#e8a858" rx="1"/><ellipse cx="434.0" cy="332" rx="8.5" ry="2.5" fill="#587070" /><rect x="427.5" y="311" width="11" height="21" fill="#c87830" rx="2"/><rect x="427.5" y="311" width="2.5" height="21" fill="#a05a1c" rx="1"/><rect x="426" y="308" width="14" height="7" fill="#d08838" rx="2.5"/><rect x="428" y="309" width="9" height="2" fill="#e8a858" rx="1"/><rect x="385" y="200" width="30" height="3" fill="#587070" /><rect x="397" y="176" width="5" height="30" fill="#b86c28" /><polygon points="384,178 398,172 400,169 406,170 406,174 416,176 415,196 386,199" fill="#c87830" stroke="#8c4c14" stroke-width="1"/><rect x="390" y="183" width="20" height="2" fill="#8c4c14" /><rect x="390" y="189" width="16" height="2" fill="#8c4c14" /></g><rect x="1" y="240" width="47" height="48" fill="#2860b8" /><rect x="6" y="247" width="10" height="1.5" fill="#5898e8" /><rect x="28" y="252" width="12" height="1.5" fill="#5898e8" /><rect x="10" y="262" width="14" height="1.5" fill="#5898e8" /><rect x="30" y="270" width="10" height="1.5" fill="#5898e8" /><rect x="5" y="278" width="12" height="1.5" fill="#5898e8" /><rect x="26" y="284" width="14" height="1.5" fill="#5898e8" /><ellipse cx="14" cy="254" rx="7" ry="5" fill="#2054a8" /><ellipse cx="34" cy="262" rx="7" ry="5" fill="#2054a8" /><ellipse cx="12" cy="270" rx="7" ry="5" fill="#2054a8" /><ellipse cx="36" cy="246" rx="7" ry="5" fill="#2054a8" /><ellipse cx="22" cy="280" rx="7" ry="5" fill="#2054a8" /><polygon points="56,254 60,244 64,250 68,243 72,249 76,254" fill="#50b828" /><polygon points="59,254 63,248 68,254" fill="#88e050" /><polygon points="88,254 92,244 96,250 100,243 104,249 108,254" fill="#50b828" /><polygon points="91,254 95,248 100,254" fill="#88e050" /><polygon points="120,254 124,244 128,250 132,243 136,249 140,254" fill="#50b828" /><polygon points="123,254 127,248 132,254" fill="#88e050" /><polygon points="150,254 155,244 160,248 165,243 170,250 173,254" fill="#70d040" /><ellipse cx="161" cy="248" rx="4" ry="3.5" fill="#fff8f0" /><ellipse cx="157" cy="252" rx="2" ry="2" fill="#f06060" /><ellipse cx="166" cy="250" rx="2" ry="2" fill="#f06060" /><ellipse cx="66" cy="269" rx="5" ry="2.5" fill="#48a030" /><ellipse cx="66" cy="266" rx="5" ry="4" fill="#e04840" /><ellipse cx="65" cy="264.5" rx="2" ry="1.2" fill="#f8a098" /><ellipse cx="60" cy="279" rx="5" ry="2.5" fill="#48a030" /><ellipse cx="60" cy="276" rx="5" ry="4" fill="#e04840" /><ellipse cx="59" cy="274.5" rx="2" ry="1.2" fill="#f8a098" /><ellipse cx="88" cy="269" rx="5" ry="2.5" fill="#48a030" /><ellipse cx="88" cy="266" rx="5" ry="4" fill="#e04840" /><ellipse cx="87" cy="264.5" rx="2" ry="1.2" fill="#f8a098" /><ellipse cx="100" cy="275" rx="5" ry="2.5" fill="#48a030" /><ellipse cx="100" cy="272" rx="5" ry="4" fill="#e04840" /><ellipse cx="99" cy="270.5" rx="2" ry="1.2" fill="#f8a098" /><ellipse cx="126" cy="275" rx="5" ry="2.5" fill="#48a030" /><ellipse cx="126" cy="272" rx="5" ry="4" fill="#e04840" /><ellipse cx="125" cy="270.5" rx="2" ry="1.2" fill="#f8a098" /><ellipse cx="161" cy="271" rx="5" ry="2.5" fill="#48a030" /><ellipse cx="161" cy="268" rx="5" ry="4" fill="#e04840" /><ellipse cx="160" cy="266.5" rx="2" ry="1.2" fill="#f8a098" /><ellipse cx="168" cy="277" rx="5" ry="2.5" fill="#48a030" /><ellipse cx="168" cy="274" rx="5" ry="4" fill="#e04840" /><ellipse cx="167" cy="272.5" rx="2" ry="1.2" fill="#f8a098" /><ellipse cx="156" cy="285" rx="5" ry="2.5" fill="#48a030" /><ellipse cx="156" cy="282" rx="5" ry="4" fill="#e04840" /><ellipse cx="155" cy="280.5" rx="2" ry="1.2" fill="#f8a098" /><rect x="177" y="285" width="76" height="10" fill="#2458b0" /><path d="M177 295 q5 5 10 0 z" fill="#2458b0" stroke="#58a8f0" stroke-width="1.1"/><path d="M191 295 q5 5 10 0 z" fill="#2458b0" stroke="#58a8f0" stroke-width="1.1"/><path d="M205 295 q5 5 10 0 z" fill="#2458b0" stroke="#58a8f0" stroke-width="1.1"/><path d="M219 295 q5 5 10 0 z" fill="#2458b0" stroke="#58a8f0" stroke-width="1.1"/><path d="M233 295 q5 5 10 0 z" fill="#2458b0" stroke="#58a8f0" stroke-width="1.1"/><rect x="180" y="284" width="4" height="11" fill="#b88850" /><rect x="209" y="284" width="4" height="11" fill="#b88850" /><rect x="238" y="284" width="4" height="11" fill="#b88850" /><rect x="175" y="256" width="82" height="29" fill="#ecd0a0" /><rect x="175" y="282" width="82" height="3.5" fill="#c8a070" /><rect x="181.0" y="257" width="1" height="25" fill="#d0b080" /><rect x="194.5" y="257" width="1" height="25" fill="#d0b080" /><rect x="208.0" y="257" width="1" height="25" fill="#d0b080" /><rect x="221.5" y="257" width="1" height="25" fill="#d0b080" /><rect x="235.0" y="257" width="1" height="25" fill="#d0b080" /><rect x="248.5" y="257" width="1" height="25" fill="#d0b080" /><rect x="178" y="251" width="8" height="13" fill="#f0dcb0" rx="3.5" stroke="#b89060" stroke-width="1"/><rect x="180.5" y="257" width="3" height="5" fill="#c8a070" rx="1"/><rect x="178" y="270" width="8" height="12" fill="#f0dcb0" rx="3.5" stroke="#b89060" stroke-width="1"/><rect x="180.5" y="276" width="3" height="5" fill="#c8a070" rx="1"/><rect x="207" y="251" width="8" height="13" fill="#f0dcb0" rx="3.5" stroke="#b89060" stroke-width="1"/><rect x="209.5" y="257" width="3" height="5" fill="#c8a070" rx="1"/><rect x="207" y="270" width="8" height="12" fill="#f0dcb0" rx="3.5" stroke="#b89060" stroke-width="1"/><rect x="209.5" y="276" width="3" height="5" fill="#c8a070" rx="1"/><rect x="236" y="251" width="8" height="13" fill="#f0dcb0" rx="3.5" stroke="#b89060" stroke-width="1"/><rect x="238.5" y="257" width="3" height="5" fill="#c8a070" rx="1"/><rect x="236" y="270" width="8" height="12" fill="#f0dcb0" rx="3.5" stroke="#b89060" stroke-width="1"/><rect x="238.5" y="276" width="3" height="5" fill="#c8a070" rx="1"/><ellipse cx="295.5" cy="309.5" rx="17" ry="6.5" fill="#186060" /><rect x="291" y="294" width="9" height="16" fill="#c06820" /><polygon points="290,248 300,248 309.4,258 310,266.4 317.7,274.5 317.7,285.4 308.6,294.2 298.4,296.4 290.4,296.4 281.6,292 274.3,284.7 274.3,270.8 282,263.5 282.7,256.2" fill="#68c418" stroke="#1c6048" stroke-width="1.4" stroke-linejoin="round"/><polygon points="275,284 284,288 296,285 308,288 317,284 317,285.4 308.6,293.6 298.4,295.6 290.4,295.6 281.6,291.4 275,284.7" fill="#5a9c18" /><ellipse cx="296" cy="264" rx="9" ry="8" fill="#84dc3c" /><ellipse cx="286" cy="277" rx="5" ry="4" fill="#7cd430" /><ellipse cx="304" cy="278" rx="6" ry="4" fill="#7cd430" /><path d="M4 300 L16 297 L26 306 L44 302 L56 296 L68 298 L70 318 L66 334 L70 346 L62 354 L52 350 L40 362 L30 364 L22 354 L14 350 L16 330 L10 318 Z" fill="#2860b8"/><rect x="22" y="318" width="30" height="1.5" fill="#4080d8" /><rect x="16" y="332" width="22" height="1.5" fill="#4080d8" /><rect x="30" y="340" width="26" height="1.5" fill="#4080d8" /><rect x="24" y="350" width="16" height="1.5" fill="#4080d8" /><path d="M80 312 L88 308 L94 314 L96 304 L102 304 L102 316 L112 322 L110 332 L104 330 L98 335 L90 334 L88 324 Z" fill="#2860b8"/><rect x="132" y="296" width="39" height="37" fill="#187850" rx="5"/><rect x="131" y="299" width="41" height="30" fill="#187850" rx="3"/><ellipse cx="144.2" cy="318.1" rx="2.6" ry="2.3" fill="#0c6444" /><ellipse cx="154.3" cy="307.7" rx="2.6" ry="2.3" fill="#28985c" /><ellipse cx="138.3" cy="308.2" rx="2.6" ry="2.3" fill="#28985c" /><ellipse cx="146.5" cy="309.6" rx="2.6" ry="2.3" fill="#107048" /><ellipse cx="156.8" cy="325.5" rx="2.6" ry="2.3" fill="#30a868" /><ellipse cx="143.0" cy="312.3" rx="2.6" ry="2.3" fill="#107048" /><ellipse cx="149.4" cy="324.9" rx="2.6" ry="2.3" fill="#28985c" /><ellipse cx="138.5" cy="301.5" rx="2.6" ry="2.3" fill="#30a868" /><ellipse cx="140.4" cy="328.7" rx="2.6" ry="2.3" fill="#28985c" /><ellipse cx="164.9" cy="298.1" rx="2.6" ry="2.3" fill="#0c6444" /><ellipse cx="158.9" cy="305.0" rx="2.6" ry="2.3" fill="#28985c" /><ellipse cx="159.9" cy="301.4" rx="2.6" ry="2.3" fill="#107048" /><ellipse cx="151.0" cy="305.9" rx="2.6" ry="2.3" fill="#107048" /><ellipse cx="140.4" cy="311.8" rx="2.6" ry="2.3" fill="#30a868" /><ellipse cx="152.4" cy="301.3" rx="2.6" ry="2.3" fill="#28985c" /><ellipse cx="144.9" cy="326.1" rx="2.6" ry="2.3" fill="#0c6444" /><ellipse cx="153.1" cy="318.2" rx="2.6" ry="2.3" fill="#0c6444" /><ellipse cx="157.9" cy="306.3" rx="2.6" ry="2.3" fill="#28985c" /><ellipse cx="149.9" cy="297.8" rx="2.6" ry="2.3" fill="#30a868" /><ellipse cx="142.2" cy="303.6" rx="2.6" ry="2.3" fill="#0c6444" /><ellipse cx="147.4" cy="304.6" rx="2.6" ry="2.3" fill="#28985c" /><ellipse cx="158.9" cy="319.8" rx="2.6" ry="2.3" fill="#30a868" /><ellipse cx="158.4" cy="302.2" rx="2.6" ry="2.3" fill="#30a868" /><ellipse cx="141.6" cy="315.0" rx="2.6" ry="2.3" fill="#30a868" /><ellipse cx="135.6" cy="318.8" rx="2.6" ry="2.3" fill="#28985c" /><ellipse cx="139.9" cy="308.2" rx="2.6" ry="2.3" fill="#107048" /><ellipse cx="163.4" cy="306.6" rx="2.6" ry="2.3" fill="#30a868" /><ellipse cx="142.6" cy="302.0" rx="2.6" ry="2.3" fill="#0c6444" /><ellipse cx="168.7" cy="327.4" rx="2.6" ry="2.3" fill="#107048" /><ellipse cx="157.1" cy="305.5" rx="2.6" ry="2.3" fill="#107048" /><ellipse cx="149.8" cy="320.5" rx="2.6" ry="2.3" fill="#0c6444" /><ellipse cx="166.1" cy="297.1" rx="2.6" ry="2.3" fill="#28985c" /><ellipse cx="150.9" cy="299.0" rx="2.6" ry="2.3" fill="#28985c" /><ellipse cx="149.0" cy="323.2" rx="2.6" ry="2.3" fill="#0c6444" /><ellipse cx="146.6" cy="306.1" rx="2.6" ry="2.3" fill="#107048" /><ellipse cx="139.1" cy="325.7" rx="2.6" ry="2.3" fill="#30a868" /><ellipse cx="166.0" cy="323.6" rx="2.6" ry="2.3" fill="#28985c" /><ellipse cx="152.6" cy="318.3" rx="2.6" ry="2.3" fill="#0c6444" /><ellipse cx="153.9" cy="301.9" rx="2.6" ry="2.3" fill="#30a868" /><ellipse cx="134.6" cy="322.7" rx="2.6" ry="2.3" fill="#107048" /><ellipse cx="139.4" cy="306.4" rx="2.6" ry="2.3" fill="#0c6444" /><ellipse cx="145.5" cy="313.7" rx="2.6" ry="2.3" fill="#107048" /><ellipse cx="163.5" cy="311.3" rx="2.6" ry="2.3" fill="#107048" /><rect x="176" y="306" width="31" height="28" fill="#187850" rx="5"/><rect x="175" y="309" width="33" height="21" fill="#187850" rx="3"/><ellipse cx="187.0" cy="320.1" rx="2.6" ry="2.3" fill="#30a868" /><ellipse cx="190.0" cy="326.3" rx="2.6" ry="2.3" fill="#30a868" /><ellipse cx="194.9" cy="317.7" rx="2.6" ry="2.3" fill="#30a868" /><ellipse cx="185.6" cy="324.4" rx="2.6" ry="2.3" fill="#0c6444" /><ellipse cx="194.0" cy="328.7" rx="2.6" ry="2.3" fill="#0c6444" /><ellipse cx="181.9" cy="316.5" rx="2.6" ry="2.3" fill="#107048" /><ellipse cx="180.0" cy="317.2" rx="2.6" ry="2.3" fill="#107048" /><ellipse cx="197.7" cy="323.7" rx="2.6" ry="2.3" fill="#0c6444" /><ellipse cx="180.4" cy="316.9" rx="2.6" ry="2.3" fill="#30a868" /><ellipse cx="193.5" cy="314.7" rx="2.6" ry="2.3" fill="#0c6444" /><ellipse cx="191.6" cy="327.9" rx="2.6" ry="2.3" fill="#0c6444" /><ellipse cx="184.5" cy="309.7" rx="2.6" ry="2.3" fill="#30a868" /><ellipse cx="184.4" cy="323.9" rx="2.6" ry="2.3" fill="#30a868" /><ellipse cx="196.9" cy="320.2" rx="2.6" ry="2.3" fill="#30a868" /><ellipse cx="197.6" cy="330.6" rx="2.6" ry="2.3" fill="#0c6444" /><ellipse cx="182.5" cy="311.7" rx="2.6" ry="2.3" fill="#0c6444" /><ellipse cx="182.3" cy="318.7" rx="2.6" ry="2.3" fill="#28985c" /><ellipse cx="181.4" cy="321.6" rx="2.6" ry="2.3" fill="#0c6444" /><ellipse cx="186.2" cy="317.1" rx="2.6" ry="2.3" fill="#107048" /><ellipse cx="194.5" cy="309.4" rx="2.6" ry="2.3" fill="#107048" /><ellipse cx="202.6" cy="325.3" rx="2.6" ry="2.3" fill="#107048" /><ellipse cx="190.9" cy="330.6" rx="2.6" ry="2.3" fill="#30a868" /><ellipse cx="180.3" cy="325.2" rx="2.6" ry="2.3" fill="#28985c" /><ellipse cx="196.1" cy="317.4" rx="2.6" ry="2.3" fill="#107048" /><ellipse cx="178.6" cy="324.8" rx="2.6" ry="2.3" fill="#28985c" /><ellipse cx="194.1" cy="328.8" rx="2.6" ry="2.3" fill="#30a868" /><ellipse cx="240" cy="340" rx="27" ry="7" fill="#50a830" /><path d="M214 336 L218 322 L244 314 L262 318 L266 334 L248 346 L226 346 Z" fill="#e8cc90" stroke="#b89050" stroke-width="1"/><polygon points="226,346 248,346 266,334 262,326 240,332 224,332" fill="#c8a060" /><g transform="translate(278,326)"><path d="M6 68 L44 70 L50 62 L50 52 L44 50 L46 14 C44 2 30 0 18 1 C6 3 2 10 2 22 L6 68 Z" fill="#7a7e80"/><path d="M6 66 L38 68 L40 16 C38 6 28 4 18 5 C8 7 4 12 4 22 Z" fill="#95999b"/><rect x="10" y="32" width="26" height="28" fill="#818587" rx="2"/><rect x="13" y="37" width="20" height="3" fill="#95999b" /><rect x="13" y="44" width="20" height="3" fill="#95999b" /><rect x="13" y="51" width="16" height="3" fill="#95999b" /><path d="M10 18 l5 6 l5 -7 l6 7 l6 -8" fill="none" stroke="#7a7e80" stroke-width="2.4"/></g><g transform="translate(82,344)"><path d="M16 64 C28 82 60 80 80 60 C88 52 93 44 94 34" fill="none" stroke="#58a8f0" stroke-width="1.4"/><path d="M20 72 C36 82 58 80 72 68 M84 62 C90 54 94 46 95 40" fill="none" stroke="#78b8f8" stroke-width="1.1"/><polygon points="0,47.5 5.7,46.5 7.9,41 21,34 32,36.5 43.4,34 47.9,24 63.4,17.5 74.5,12 89,18.7 90,37.5 79,55 61,70 41,74 23.4,66 19,53 0,51.5" fill="#a87848" stroke="#181008" stroke-width="2" stroke-linejoin="round"/><polygon points="2,48 8,43 21,36.5 32,39 43,37 47,44 36,50 20,50" fill="#d8b078" /><polygon points="0,48 18,48 18,51.5 0,51.5" fill="#6c4828" /><polygon points="50,26 63.4,19.5 74.5,14.5 87,20 87,30 70,42 52,46" fill="#c89860" /><polygon points="64,17 75,13.5 87,19 80,24 68,22" fill="#e4bc84" /><polygon points="22,55 40,58 62,52 80,40 78,52 61,66 41,70 25,63" fill="#8c6038" /><path d="M52 40 L58 30 M60 44 L66 32 M68 42 L74 28 M76 36 L82 24 M26 60 L62 58 L82 44" fill="none" stroke="#5c3c1c" stroke-width="1.2"/><ellipse cx="40" cy="63" rx="2" ry="2" fill="#f0e8e0" /><rect x="45.3" y="8" width="3" height="38" fill="#c09060" stroke="#402810" stroke-width=".9"/><ellipse cx="46.8" cy="4.5" rx="4.6" ry="4.6" fill="#d8b078" stroke="#402810" stroke-width="1.2"/><polygon points="25.5,5.5 28.5,3.2 67,30 64.5,33.5" fill="#f8f8f8" stroke="#202020" stroke-width="1"/></g></svg></div>
<div class="a" style="left:114px;top:273px;width:114px;height:114px;border:1px solid #000;box-shadow:inset 0 0 0 1px #c85838,inset 0 0 0 2px #000"></div>
</div>
<div class="t" style="left:4px;top:519px;">This parameter is common to all banks</div>
<div class="btn" style="left:462px;top:517px;width:80px;height:20px;line-height:18px;">Grid</div>
<div class="t" style="left:21px;top:548px;">Tip size(pixels)</div>
<div class="inp" style="left:11px;top:566px;width:60px;height:20px;line-height:17px;">16</div>
<div class="inp" style="left:76px;top:566px;width:60px;height:20px;line-height:17px;">16</div>
<div class="btn" style="left:161px;top:566px;width:80px;height:20px;line-height:18px;">Apply</div>
<div class="t" style="left:161px;top:590px;">Push the apply button</div>
<div class="t" style="left:161px;top:606px;letter-spacing:.33px">to reflect the parameter</div>
<div class="t" style="left:21px;top:598px;">Map size(tips)</div>
<div class="inp" style="left:11px;top:616px;width:60px;height:20px;line-height:17px;">32</div>
<div class="inp" style="left:76px;top:616px;width:60px;height:20px;line-height:17px;">256</div>
<div class="t" style="left:21px;top:658px;">Move all map tips</div>
<div class="inp" style="left:11px;top:676px;width:60px;height:20px;line-height:17px;">0</div>
<div class="inp" style="left:76px;top:676px;width:60px;height:20px;line-height:17px;">0</div>
<div class="btn" style="left:161px;top:676px;width:80px;height:20px;line-height:18px;">Move</div>
</div>
<div class="a" style="left:545px;top:81px;width:4px;height:707px;background:#f2f2f2;"></div>
<div class="a" style="left:548px;top:81px;width:2px;height:707px;background:#c6c6c6;"></div>
<div class="a" style="left:551px;top:81px;width:337px;height:707px;overflow:hidden">
<div class="btn" style="left:0px;top:0px;width:60px;height:23px;line-height:21px;">Set</div>
<div class="btn" style="left:60px;top:0px;width:60px;height:23px;line-height:21px;">Set2</div>
<div class="btn" style="left:120px;top:0px;width:60px;height:23px;line-height:21px;">Clear</div>
<div class="btn" style="left:180px;top:0px;width:60px;height:23px;line-height:21px;">Copy</div>
<div class="btn" style="left:240px;top:0px;width:60px;height:23px;line-height:21px;">Paste</div>
<div class="btn" style="left:300px;top:0px;width:60px;height:23px;line-height:21px;">Paste2</div>
<div class="a" style="left:317px;top:24px;width:20px;height:663px;background:#e2e2e2;"></div>
<div class="a" style="left:0px;top:687px;width:337px;height:20px;background:#e6e6e6;"></div>
<svg class="a" style="left:322px;top:28px" width="10" height="9"><polygon points="0,9 5.0,0 10,9" fill="#000"/></svg>
<svg class="a" style="left:322px;top:673px" width="10" height="9"><polygon points="0,0 10,0 5.0,9" fill="#000"/></svg>
<svg class="a" style="left:3px;top:692px" width="9" height="10"><polygon points="9,0 9,10 0,5.0" fill="#000"/></svg>
<svg class="a" style="left:304px;top:692px" width="9" height="10"><polygon points="0,0 9,5.0 0,10" fill="#000"/></svg>
<div class="a" style="left:0;top:24px;width:317px;height:663px;overflow:hidden">
<svg width="317" height="663" viewBox="0 0 317 663" style="display:block;position:absolute;left:0;top:0"><defs><pattern id="wat" x="56" y="1.6" width="19.2" height="19.2" patternUnits="userSpaceOnUse"><rect x="0" y="0" width="19.2" height="19.2" fill="#3268c4" /><ellipse cx="4" cy="5" rx="3.2" ry="2.4" fill="#2a5cb8" /><ellipse cx="12" cy="4" rx="3.4" ry="2.2" fill="#2a5cb8" /><ellipse cx="8" cy="11" rx="3.6" ry="2.6" fill="#2a5cb8" /><ellipse cx="16" cy="13" rx="3" ry="2.4" fill="#2a5cb8" /><ellipse cx="3" cy="15" rx="2.8" ry="2.2" fill="#2a5cb8" /><ellipse cx="13" cy="17" rx="3" ry="2" fill="#2a5cb8" /><rect x="2" y="8" width="5" height="0.9" fill="#6ca4f0" /><rect x="10" y="14.6" width="6" height="0.9" fill="#6ca4f0" /><rect x="12" y="7.6" width="4" height="0.8" fill="#5a94e8" /><rect x="5" y="2.6" width="4" height="0.8" fill="#5a94e8" /><rect x="0" y="0" width="19.2" height="0.8" fill="#78a8ec" opacity=".3"/><rect x="3" y="0" width="5" height="0.8" fill="#98c0f8" /><rect x="12" y="0" width="4" height="0.8" fill="#98c0f8" /><rect x="0" y="0" width="0.7" height="19.2" fill="#4a80d4" opacity=".25"/></pattern><pattern id="grs" x="56" y="0" width="19.2" height="19.2" patternUnits="userSpaceOnUse"><rect x="0" y="0" width="19.2" height="19.2" fill="#46ae30" /><path d="M1 7 L6 2 M9 13 L15 7 M3 17 L8 12 M13 5 L17 1 M12 18 L17 13" stroke="#56ba3c" stroke-width="1.6"/><path d="M0 12 L4 8 M7 8 L11 4 M14 12 L18 8 M6 19 L9 16" stroke="#3ea42a" stroke-width="1.3"/></pattern></defs><rect x="54" y="0" width="2" height="663" fill="#868686" /><rect x="261" y="0" width="2" height="663" fill="#868686" /><rect x="56" y="0" width="205" height="72.5" fill="url(#wat)" /><rect x="56" y="72.5" width="205" height="300.5" fill="url(#grs)" /><rect x="56" y="373" width="205" height="290" fill="url(#wat)" /><rect x="56" y="0" width="0.8" height="663" fill="#b0d0f8" opacity=".6"/><rect x="113.6" y="0" width="0.9" height="72.5" fill="#90b8f4" opacity=".85"/><rect x="113.6" y="373" width="0.9" height="290" fill="#90b8f4" opacity=".85"/><rect x="113.6" y="72.5" width="0.9" height="300.5" fill="#5cc044" opacity=".5"/><rect x="132.8" y="0" width="0.9" height="72.5" fill="#90b8f4" opacity=".85"/><rect x="132.8" y="373" width="0.9" height="290" fill="#90b8f4" opacity=".85"/><rect x="132.8" y="72.5" width="0.9" height="300.5" fill="#5cc044" opacity=".5"/><rect x="209.6" y="0" width="0.9" height="72.5" fill="#90b8f4" opacity=".85"/><rect x="209.6" y="373" width="0.9" height="290" fill="#90b8f4" opacity=".85"/><rect x="209.6" y="72.5" width="0.9" height="300.5" fill="#5cc044" opacity=".5"/><rect x="228.8" y="0" width="0.9" height="72.5" fill="#90b8f4" opacity=".85"/><rect x="228.8" y="373" width="0.9" height="290" fill="#90b8f4" opacity=".85"/><rect x="228.8" y="72.5" width="0.9" height="300.5" fill="#5cc044" opacity=".5"/></svg>
</div>
<div class="a" style="left:318px;top:407px;width:18px;height:245px;background:#f2f2f2;border:1px solid #dadada;border-radius:3px"></div>
</div>
</div>
<div class="frame"></div>
</div>
<svg class="a" style="left:1197px;top:151px" width="14" height="21" viewBox="0 0 14 21"><path d="M1 1 L1 16.5 L4.8 13 L7.6 19.5 L10 18.5 L7.3 12.2 L12.3 12.2 Z" fill="#fff" stroke="#000" stroke-width="1.1" stroke-linejoin="miter"/></svg>
</body></html>
